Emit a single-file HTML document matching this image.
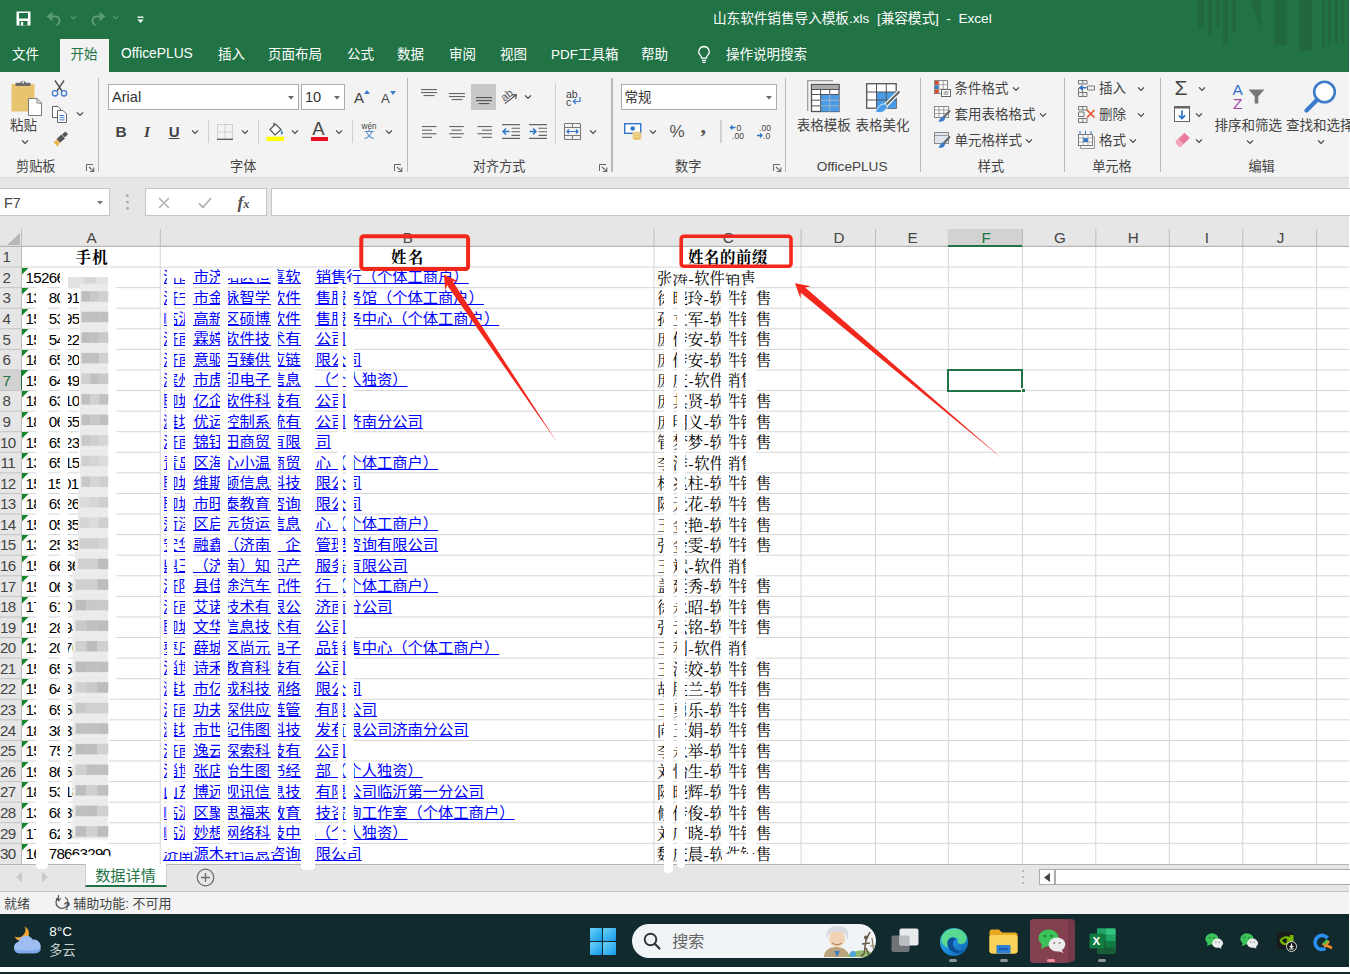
<!DOCTYPE html>
<html lang="zh-CN"><head><meta charset="utf-8"><title>山东软件销售导入模板.xls - Excel</title>
<style>
html,body{margin:0;padding:0;}
body{width:1350px;height:974px;overflow:hidden;background:#fff;position:relative;font-family:"Liberation Sans","Noto Sans CJK SC",sans-serif;}
.a{position:absolute;box-sizing:border-box;}
.t{white-space:nowrap;}
.ser{font-family:"Liberation Serif","Noto Serif CJK SC",serif;}
.lnk{color:#0000ff;text-decoration:underline;text-decoration-thickness:1px;text-underline-offset:1.3px;}
svg{overflow:visible;}
</style></head>
<body>
<div class="a" style="left:0px;top:0px;width:1349px;height:72.3px;background:#217346;"></div>
<svg class="a" style="left:1190px;top:0px;" width="159" height="60" viewBox="0 0 159 60"><rect x="8" y="0" width="6" height="28" fill="#22683f"/><rect x="18" y="0" width="4" height="36" fill="#22683f"/><rect x="26" y="0" width="4" height="28" fill="#22683f"/><rect x="33" y="0" width="5" height="45" fill="#22683f"/><rect x="42" y="0" width="4" height="33" fill="#22683f"/><rect x="84" y="0" width="13" height="45" fill="#22683f"/><rect x="109" y="0" width="13" height="51" fill="#22683f"/><rect x="132" y="0" width="3" height="47" fill="#22683f"/><rect x="138" y="0" width="3" height="46" fill="#22683f"/><rect x="145" y="0" width="3" height="44" fill="#22683f"/><rect x="151" y="0" width="3" height="43" fill="#22683f"/><path d="M60 0 H71 V29 Z" fill="#22683f"/></svg>
<svg class="a" style="left:16px;top:11px;" width="15" height="15" viewBox="0 0 15 15"><path d="M0.5 0.5 H14.5 V14.5 H0.5 Z" fill="#fff"/><rect x="3" y="2" width="9" height="5.5" fill="#217346"/><rect x="3.5" y="10" width="8" height="4.5" fill="#217346"/><rect x="5" y="11" width="2.2" height="3.5" fill="#fff"/></svg>
<svg class="a" style="left:46px;top:10px;" width="18" height="16" viewBox="0 0 18 16"><path d="M2 6.5 H10.5 A4.5 4.5 0 0 1 10.5 15" fill="none" stroke="#5a9a76" stroke-width="2"/><path d="M0.5 6.5 L6.5 1.5 V11.5 Z" fill="#5a9a76"/></svg>
<svg class="a" style="left:69.9px;top:14.9px;" width="7.2" height="5.2" viewBox="0 0 7.2 5.2"><path d="M1 1.17 L3.6 3.77 L6.2 1.17" fill="none" stroke="#5a9a76" stroke-width="1.1"/></svg>
<svg class="a" style="left:88px;top:10px;" width="18" height="16" viewBox="0 0 18 16"><path d="M16 6.5 H7.5 A4.5 4.5 0 0 0 7.5 15" fill="none" stroke="#5a9a76" stroke-width="2"/><path d="M17.5 6.5 L11.5 1.5 V11.5 Z" fill="#5a9a76"/></svg>
<svg class="a" style="left:112.4px;top:14.9px;" width="7.2" height="5.2" viewBox="0 0 7.2 5.2"><path d="M1 1.17 L3.6 3.77 L6.2 1.17" fill="none" stroke="#5a9a76" stroke-width="1.1"/></svg>
<svg class="a" style="left:137px;top:16px;" width="7" height="8" viewBox="0 0 7 8"><rect x="0.5" y="0.5" width="6" height="1.4" fill="#fff"/><path d="M0.3 3.6 H6.7 L3.5 7 Z" fill="#fff"/></svg>
<div class="a t " style="left:713px;top:8.00px;height:22px;line-height:22px;font-size:13.6px;color:#fff;">山东软件销售导入模板.xls&nbsp; [兼容模式]&nbsp; -&nbsp; Excel</div>
<div class="a" style="left:60px;top:38.5px;width:49px;height:34px;background:#f3f3f3;"></div>
<div class="a t " style="left:12px;top:44.00px;height:22px;line-height:22px;font-size:13.5px;color:#fff;">文件</div>
<div class="a t " style="left:121px;top:43.00px;height:22px;line-height:22px;font-size:13.8px;color:#fff;">OfficePLUS</div>
<div class="a t " style="left:218px;top:44.00px;height:22px;line-height:22px;font-size:13.5px;color:#fff;">插入</div>
<div class="a t " style="left:268px;top:44.00px;height:22px;line-height:22px;font-size:13.5px;color:#fff;">页面布局</div>
<div class="a t " style="left:347px;top:44.00px;height:22px;line-height:22px;font-size:13.5px;color:#fff;">公式</div>
<div class="a t " style="left:397px;top:44.00px;height:22px;line-height:22px;font-size:13.5px;color:#fff;">数据</div>
<div class="a t " style="left:449px;top:44.00px;height:22px;line-height:22px;font-size:13.5px;color:#fff;">审阅</div>
<div class="a t " style="left:500px;top:44.00px;height:22px;line-height:22px;font-size:13.5px;color:#fff;">视图</div>
<div class="a t " style="left:551px;top:44.00px;height:22px;line-height:22px;font-size:13.5px;color:#fff;">PDF工具箱</div>
<div class="a t " style="left:641px;top:44.00px;height:22px;line-height:22px;font-size:13.5px;color:#fff;">帮助</div>
<div class="a t " style="left:726px;top:44.00px;height:22px;line-height:22px;font-size:13.5px;color:#fff;">操作说明搜索</div>
<div class="a t " style="left:70.5px;top:44.00px;height:22px;line-height:22px;font-size:13.5px;color:#217346;">开始</div>
<svg class="a" style="left:696px;top:45px;" width="16" height="20" viewBox="0 0 16 20"><path d="M8 1.5 A5.2 5.2 0 0 0 4.6 10.6 C5.4 11.4 5.6 12.2 5.6 13.2 H10.4 C10.4 12.2 10.6 11.4 11.4 10.6 A5.2 5.2 0 0 0 8 1.5 Z" fill="none" stroke="#fff" stroke-width="1.3"/><path d="M5.8 15.3 H10.2 M6.4 17.4 H9.6" stroke="#fff" stroke-width="1.3"/></svg>
<div class="a" style="left:0px;top:72.3px;width:1349px;height:105px;background:#f3f3f3;"></div>
<div class="a" style="left:0px;top:177.3px;width:1349px;height:51px;background:#e6e6e6;"></div>
<div class="a" style="left:0px;top:176.7px;width:1349px;height:1.2px;background:#dadada;"></div>
<svg class="a" style="left:11px;top:79px;" width="32" height="37" viewBox="0 0 32 37"><rect x="0.5" y="5" width="23" height="27.5" fill="#e9c46f"/><path d="M4.5 7 V3.8 H9.3 A2.8 2.8 0 0 1 14.7 3.8 H19.5 V7 Z" fill="#6b6b6b"/><circle cx="12" cy="3.3" r="1.1" fill="#f3f3f3"/><path d="M17.5 19.5 H26 L30.5 24 V36.5 H17.5 Z" fill="#fff" stroke="#7a7a7a" stroke-width="1"/><path d="M26 19.5 V24 H30.5" fill="none" stroke="#7a7a7a" stroke-width="1"/></svg>
<div class="a t " style="left:10px;top:115.00px;height:22px;line-height:22px;font-size:13.5px;color:#444;">粘贴</div>
<svg class="a" style="left:21px;top:138.5px;" width="8" height="6" viewBox="0 0 8 6"><path d="M1 1.35 L4 4.35 L7 1.35" fill="none" stroke="#444" stroke-width="1.2"/></svg>
<svg class="a" style="left:51px;top:80px;" width="17" height="17" viewBox="0 0 17 17"><path d="M4 0.5 L11 11 M13 0.5 L6 11" stroke="#555" stroke-width="1.4" fill="none"/><circle cx="4" cy="13.3" r="2.7" fill="none" stroke="#3d7cc9" stroke-width="1.3"/><circle cx="13" cy="13.3" r="2.7" fill="none" stroke="#3d7cc9" stroke-width="1.3"/></svg>
<svg class="a" style="left:52px;top:106px;" width="16" height="17" viewBox="0 0 16 17"><path d="M0.5 0.5 H6 L8.5 3 V11.5 H0.5 Z" fill="#fff" stroke="#666" stroke-width="1"/><path d="M5.5 4.5 H11 L14.5 8 V16.5 H5.5 Z" fill="#fff" stroke="#666" stroke-width="1"/><path d="M7.5 9.5 H12.5 M7.5 11.7 H12.5 M7.5 13.9 H12.5" stroke="#3d7cc9" stroke-width="1"/></svg>
<svg class="a" style="left:76px;top:111px;" width="8" height="6" viewBox="0 0 8 6"><path d="M1 1.35 L4 4.35 L7 1.35" fill="none" stroke="#444" stroke-width="1.2"/></svg>
<svg class="a" style="left:53px;top:131px;" width="16" height="16" viewBox="0 0 16 16"><path d="M9 3.5 L12.5 0.5 L15 3.2 L11.8 6.2 Z" fill="#555"/><path d="M3.5 8 L8.5 3.6 L12 7.4 L7 11.8 Z" fill="#555"/><path d="M0.5 11.5 L3.8 8.5 L7 12 L4.6 15.5 Z" fill="#e9b44c"/></svg>
<div class="a t " style="left:16px;top:156.40px;height:22px;line-height:22px;font-size:13.2px;color:#444;">剪贴板</div>
<svg class="a" style="left:86px;top:164px;" width="9" height="8" viewBox="0 0 9 8"><path d="M0.5 7 V0.5 H7" fill="none" stroke="#666" stroke-width="1"/><path d="M3 3 L7.5 7.2 M7.8 3.6 V7.5 H3.8" fill="none" stroke="#666" stroke-width="1.1"/></svg>
<div class="a" style="left:98.10000000000001px;top:77.5px;width:1.2px;height:94.0px;background:#b9b9b9;"></div>
<div class="a" style="left:108.3px;top:84px;width:190.7px;height:26px;background:#fff;border:1px solid #ababab;"></div>
<div class="a t " style="left:112px;top:86.00px;height:22px;line-height:22px;font-size:14.6px;color:#333;">Arial</div>
<svg class="a" style="left:288.0px;top:95.8px;" width="6" height="3.4" viewBox="0 0 6 3.4"><path d="M0 0 H6 L3.0 3.4 Z" fill="#666"/></svg>
<div class="a" style="left:301px;top:84px;width:44px;height:26px;background:#fff;border:1px solid #ababab;"></div>
<div class="a t " style="left:305px;top:86.00px;height:22px;line-height:22px;font-size:14.6px;color:#333;">10</div>
<svg class="a" style="left:334.0px;top:95.8px;" width="6" height="3.4" viewBox="0 0 6 3.4"><path d="M0 0 H6 L3.0 3.4 Z" fill="#666"/></svg>
<div class="a t " style="left:354px;top:87.00px;height:22px;line-height:22px;font-size:15px;color:#444;">A</div>
<svg class="a" style="left:364px;top:90px;" width="6" height="4" viewBox="0 0 6 4"><path d="M0 4 L3 0 L6 4 Z" fill="#3d7cc9"/></svg>
<div class="a t " style="left:381px;top:87.50px;height:22px;line-height:22px;font-size:13.2px;color:#444;">A</div>
<svg class="a" style="left:389.5px;top:91px;" width="6" height="4" viewBox="0 0 6 4"><path d="M0 0 L3 4 L6 0 Z" fill="#3d7cc9"/></svg>
<div class="a t " style="left:115.5px;top:121.00px;height:22px;line-height:22px;font-size:15.5px;color:#444;font-weight:bold;">B</div>
<div class="a t " style="left:144px;top:121.00px;height:22px;line-height:22px;font-size:15.5px;color:#444;font-style:italic;font-weight:bold;font-family:'Liberation Serif',serif;">I</div>
<div class="a t " style="left:168.7px;top:121.00px;height:22px;line-height:22px;font-size:15px;color:#444;text-decoration:underline;font-weight:bold;">U</div>
<svg class="a" style="left:191px;top:129px;" width="8" height="6" viewBox="0 0 8 6"><path d="M1 1.35 L4 4.35 L7 1.35" fill="none" stroke="#444" stroke-width="1.2"/></svg>
<div class="a" style="left:208.1px;top:120px;width:1.2px;height:23px;background:#d0d0d0;"></div>
<svg class="a" style="left:216.5px;top:124px;" width="16" height="16" viewBox="0 0 16 16"><path d="M0.5 0.5 H15.5 M0.5 0.5 V15 M15.5 0.5 V15 M8 0.5 V15 M0.5 8 H15.5" fill="none" stroke="#b0b0b0" stroke-width="1" stroke-dasharray="1 1"/><path d="M0 15.3 H16" stroke="#555" stroke-width="1.3"/></svg>
<svg class="a" style="left:241px;top:129px;" width="8" height="6" viewBox="0 0 8 6"><path d="M1 1.35 L4 4.35 L7 1.35" fill="none" stroke="#444" stroke-width="1.2"/></svg>
<div class="a" style="left:258.09999999999997px;top:120px;width:1.2px;height:23px;background:#d0d0d0;"></div>
<svg class="a" style="left:266px;top:122px;" width="19" height="20" viewBox="0 0 19 20"><path d="M4 7.5 L9.5 2 L15 7.5 L9 13 Z" fill="#fff" stroke="#555" stroke-width="1.2"/><path d="M8 3.5 V0.8" stroke="#555" stroke-width="1.2"/><path d="M15.2 8 C16.8 10 17.4 11 16.4 12.2 C15.4 13 14.2 12 15.2 8 Z" fill="#3d7cc9"/><rect x="0.5" y="14.7" width="17.5" height="4.3" fill="#ffff00"/></svg>
<svg class="a" style="left:291px;top:129px;" width="8" height="6" viewBox="0 0 8 6"><path d="M1 1.35 L4 4.35 L7 1.35" fill="none" stroke="#444" stroke-width="1.2"/></svg>
<div class="a t " style="left:312.3px;top:118.00px;height:22px;line-height:22px;font-size:18.5px;color:#444;">A</div>
<div class="a" style="left:310.5px;top:136.7px;width:17.5px;height:4.3px;background:#e81123;"></div>
<svg class="a" style="left:335px;top:129px;" width="8" height="6" viewBox="0 0 8 6"><path d="M1 1.35 L4 4.35 L7 1.35" fill="none" stroke="#444" stroke-width="1.2"/></svg>
<div class="a" style="left:352.09999999999997px;top:120px;width:1.2px;height:23px;background:#d0d0d0;"></div>
<div class="a t " style="left:361.5px;top:115.80px;height:22px;line-height:22px;font-size:8.2px;color:#444;">wén</div>
<div class="a t " style="left:364px;top:124.20px;height:22px;line-height:22px;font-size:10px;color:#3d7cc9;">文</div>
<svg class="a" style="left:385.3px;top:129px;" width="8" height="6" viewBox="0 0 8 6"><path d="M1 1.35 L4 4.35 L7 1.35" fill="none" stroke="#444" stroke-width="1.2"/></svg>
<div class="a t " style="left:230px;top:156.40px;height:22px;line-height:22px;font-size:13.2px;color:#444;">字体</div>
<svg class="a" style="left:394px;top:164px;" width="9" height="8" viewBox="0 0 9 8"><path d="M0.5 7 V0.5 H7" fill="none" stroke="#666" stroke-width="1"/><path d="M3 3 L7.5 7.2 M7.8 3.6 V7.5 H3.8" fill="none" stroke="#666" stroke-width="1.1"/></svg>
<div class="a" style="left:406.7px;top:77.5px;width:1.2px;height:94.0px;background:#b9b9b9;"></div>
<svg class="a" style="left:421px;top:88.5px;" width="16" height="9" viewBox="0 0 16 9"><rect x="0.0" y="0" width="16" height="1.1" fill="#666"/><rect x="0.0" y="3" width="16" height="1.1" fill="#666"/><rect x="2.5" y="6" width="11" height="1.1" fill="#666"/></svg>
<svg class="a" style="left:448.5px;top:92.5px;" width="16" height="9" viewBox="0 0 16 9"><rect x="0.0" y="0" width="16" height="1.1" fill="#666"/><rect x="0.0" y="3" width="16" height="1.1" fill="#666"/><rect x="2.5" y="6" width="11" height="1.1" fill="#666"/></svg>
<div class="a" style="left:470.7px;top:84px;width:25.5px;height:26px;background:#c8c8c8;"></div>
<svg class="a" style="left:475.5px;top:96.5px;" width="16" height="9" viewBox="0 0 16 9"><rect x="0.0" y="0" width="16" height="1.1" fill="#555"/><rect x="0.0" y="3" width="16" height="1.1" fill="#555"/><rect x="2.5" y="6" width="11" height="1.1" fill="#555"/></svg>
<svg class="a" style="left:501px;top:88px;" width="18" height="17" viewBox="0 0 18 17"><text x="1" y="11" font-size="11" fill="#555" transform="rotate(-38 6 9)" font-family="Liberation Sans">ab</text><path d="M4 15.5 L15.5 6.5 M15.5 6.5 L11 6.8 M15.5 6.5 L14.6 11" stroke="#555" stroke-width="1.2" fill="none"/></svg>
<svg class="a" style="left:524.3px;top:94px;" width="8" height="6" viewBox="0 0 8 6"><path d="M1 1.35 L4 4.35 L7 1.35" fill="none" stroke="#444" stroke-width="1.2"/></svg>
<div class="a" style="left:554.6999999999999px;top:83px;width:1.2px;height:61px;background:#d0d0d0;"></div>
<div class="a t " style="left:566px;top:82.50px;height:22px;line-height:22px;font-size:10.5px;color:#444;">ab</div>
<div class="a t " style="left:566px;top:90.50px;height:22px;line-height:22px;font-size:10.5px;color:#444;">c</div>
<svg class="a" style="left:572px;top:97px;" width="9" height="8" viewBox="0 0 9 8"><path d="M8 0 V4.5 H1.5 M4 2 L1.2 4.5 L4 7" fill="none" stroke="#3d7cc9" stroke-width="1.2"/></svg>
<svg class="a" style="left:421.7px;top:125.5px;" width="15" height="14.4" viewBox="0 0 15 14.4"><rect x="0" y="0.0" width="14.5" height="1.1" fill="#666"/><rect x="0" y="3.6" width="10" height="1.1" fill="#666"/><rect x="0" y="7.2" width="14.5" height="1.1" fill="#666"/><rect x="0" y="10.8" width="10" height="1.1" fill="#666"/></svg>
<svg class="a" style="left:449px;top:125.5px;" width="15" height="14.4" viewBox="0 0 15 14.4"><rect x="0.25" y="0.0" width="14.5" height="1.1" fill="#666"/><rect x="2.5" y="3.6" width="10" height="1.1" fill="#666"/><rect x="0.25" y="7.2" width="14.5" height="1.1" fill="#666"/><rect x="2.5" y="10.8" width="10" height="1.1" fill="#666"/></svg>
<svg class="a" style="left:476.5px;top:125.5px;" width="15" height="14.4" viewBox="0 0 15 14.4"><rect x="0.5" y="0.0" width="14.5" height="1.1" fill="#666"/><rect x="5" y="3.6" width="10" height="1.1" fill="#666"/><rect x="0.5" y="7.2" width="14.5" height="1.1" fill="#666"/><rect x="5" y="10.8" width="10" height="1.1" fill="#666"/></svg>
<svg class="a" style="left:501.5px;top:124px;" width="18" height="15" viewBox="0 0 18 15"><path d="M0 0.6 H18 M9.5 4.2 H18 M9.5 7.8 H18 M9.5 11.4 H18 M0 14.4 H18" stroke="#666" stroke-width="1.1"/><path d="M7.5 7.5 H1 M4 4.5 L1 7.5 L4 10.5" fill="none" stroke="#2f75c8" stroke-width="1.5"/></svg>
<svg class="a" style="left:529px;top:124px;" width="18" height="15" viewBox="0 0 18 15"><path d="M0 0.6 H18 M9.5 4.2 H18 M9.5 7.8 H18 M9.5 11.4 H18 M0 14.4 H18" stroke="#666" stroke-width="1.1"/><path d="M0.5 7.5 H7 M4 4.5 L7 7.5 L4 10.5" fill="none" stroke="#2f75c8" stroke-width="1.5"/></svg>
<svg class="a" style="left:564px;top:123px;" width="17" height="17" viewBox="0 0 17 17"><path d="M0.5 0.5 H16.5 V16.5 H0.5 Z M0.5 4.5 H16.5 M0.5 12.5 H16.5 M8.5 0.5 V4.5 M8.5 12.5 V16.5" fill="none" stroke="#777" stroke-width="1"/><path d="M3 8.5 H14 M5 6.5 L3 8.5 L5 10.5 M12 6.5 L14 8.5 L12 10.5" fill="none" stroke="#2f75c8" stroke-width="1.2"/></svg>
<svg class="a" style="left:588.7px;top:129px;" width="8" height="6" viewBox="0 0 8 6"><path d="M1 1.35 L4 4.35 L7 1.35" fill="none" stroke="#444" stroke-width="1.2"/></svg>
<div class="a t " style="left:472.7px;top:156.40px;height:22px;line-height:22px;font-size:13.2px;color:#444;">对齐方式</div>
<svg class="a" style="left:599px;top:164px;" width="9" height="8" viewBox="0 0 9 8"><path d="M0.5 7 V0.5 H7" fill="none" stroke="#666" stroke-width="1"/><path d="M3 3 L7.5 7.2 M7.8 3.6 V7.5 H3.8" fill="none" stroke="#666" stroke-width="1.1"/></svg>
<div class="a" style="left:611.4px;top:77.5px;width:1.2px;height:94.0px;background:#b9b9b9;"></div>
<div class="a" style="left:621px;top:84px;width:155.7px;height:26px;background:#fff;border:1px solid #ababab;"></div>
<div class="a t " style="left:624.5px;top:87.00px;height:22px;line-height:22px;font-size:13.5px;color:#333;">常规</div>
<svg class="a" style="left:765.7px;top:95.8px;" width="6" height="3.4" viewBox="0 0 6 3.4"><path d="M0 0 H6 L3.0 3.4 Z" fill="#666"/></svg>
<svg class="a" style="left:624px;top:123px;" width="19" height="18" viewBox="0 0 19 18"><rect x="0.7" y="0.7" width="16" height="9.6" fill="#fff" stroke="#2f75c8" stroke-width="1.4"/><circle cx="8.7" cy="5.5" r="2.3" fill="#2f75c8"/><ellipse cx="13" cy="15.3" rx="4.5" ry="1.6" fill="#e9c46f"/><ellipse cx="13" cy="12.9" rx="4.5" ry="1.6" fill="#f0d48a" stroke="#d9b25c" stroke-width="0.5"/><ellipse cx="13" cy="10.6" rx="4.5" ry="1.6" fill="#f0d48a" stroke="#d9b25c" stroke-width="0.5"/></svg>
<svg class="a" style="left:649.3px;top:129px;" width="8" height="6" viewBox="0 0 8 6"><path d="M1 1.35 L4 4.35 L7 1.35" fill="none" stroke="#444" stroke-width="1.2"/></svg>
<div class="a t " style="left:669.5px;top:121.00px;height:22px;line-height:22px;font-size:17px;color:#555;">%</div>
<div class="a t " style="left:700.5px;top:115.00px;height:22px;line-height:22px;font-size:22px;color:#555;font-weight:bold;font-family:'Liberation Serif',serif;">,</div>
<div class="a" style="left:720.4px;top:120px;width:1.2px;height:23px;background:#d0d0d0;"></div>
<svg class="a" style="left:729px;top:124px;" width="17" height="16" viewBox="0 0 17 16"><path d="M6.5 3.5 H1.5 M3.5 1.5 L1.5 3.5 L3.5 5.5" fill="none" stroke="#2f75c8" stroke-width="1.3"/><text x="7.5" y="6.5" font-size="8.6" fill="#444" font-family="Liberation Sans">0</text><text x="3" y="15" font-size="8.6" fill="#444" font-family="Liberation Sans">.00</text></svg>
<svg class="a" style="left:756px;top:124px;" width="17" height="16" viewBox="0 0 17 16"><text x="3" y="6.5" font-size="8.6" fill="#444" font-family="Liberation Sans">.00</text><path d="M1 11.5 H6 M4 9.5 L6 11.5 L4 13.5" fill="none" stroke="#2f75c8" stroke-width="1.3"/><text x="7" y="15" font-size="8.6" fill="#444" font-family="Liberation Sans">.0</text></svg>
<div class="a t " style="left:675px;top:156.40px;height:22px;line-height:22px;font-size:13.2px;color:#444;">数字</div>
<svg class="a" style="left:773px;top:164px;" width="9" height="8" viewBox="0 0 9 8"><path d="M0.5 7 V0.5 H7" fill="none" stroke="#666" stroke-width="1"/><path d="M3 3 L7.5 7.2 M7.8 3.6 V7.5 H3.8" fill="none" stroke="#666" stroke-width="1.1"/></svg>
<div class="a" style="left:785.1px;top:77.5px;width:1.2px;height:94.0px;background:#b9b9b9;"></div>
<svg class="a" style="left:807px;top:80px;" width="33" height="33" viewBox="0 0 33 33"><path d="M0.7 31 V0.7 H26" fill="none" stroke="#999" stroke-width="1.2"/><rect x="4.5" y="4.5" width="27.5" height="27" fill="#fff" stroke="#555" stroke-width="1.3"/><rect x="4.5" y="4.5" width="27.5" height="5" fill="#aaa" stroke="#555" stroke-width="1"/><rect x="13.6" y="14.5" width="18.4" height="17" fill="#4a9be8"/><path d="M4.5 14.5 H32 M4.5 20.2 H32 M4.5 25.9 H32 M13.6 9.5 V31.5 M22.8 9.5 V31.5" stroke="#555" stroke-width="1" fill="none"/><path d="M13.6 20.2 H32 M13.6 25.9 H32 M22.8 14.5 V31.5" stroke="#9fd0fa" stroke-width="1" fill="none"/></svg>
<div class="a t " style="left:796.7px;top:115.00px;height:22px;line-height:22px;font-size:13.5px;color:#444;">表格模板</div>
<svg class="a" style="left:866px;top:83px;" width="35" height="32" viewBox="0 0 35 32"><rect x="0.7" y="0.7" width="29.5" height="24.5" fill="#fff" stroke="#555" stroke-width="1.3"/><rect x="10.5" y="9" width="19.7" height="16.2" fill="#4a9be8"/><path d="M0.7 9 H30 M0.7 17 H30 M10.5 0.7 V25 M20.3 0.7 V25" stroke="#555" stroke-width="1" fill="none"/><path d="M33.5 8.5 L18 24" stroke="#fff" stroke-width="4.5"/><path d="M33.5 8.5 L18.5 23.5" stroke="#666" stroke-width="2.2"/><path d="M19.5 21 C15 20.5 12 24 9 28.5 C14 31 20 29.5 21.5 23 Z" fill="#4a9be8" stroke="#fff" stroke-width="0.8"/></svg>
<div class="a t " style="left:855.6px;top:115.00px;height:22px;line-height:22px;font-size:13.5px;color:#444;">表格美化</div>
<div class="a t " style="left:816.7px;top:156.20px;height:22px;line-height:22px;font-size:13.6px;color:#444;">OfficePLUS</div>
<div class="a" style="left:919.8px;top:77.5px;width:1.2px;height:94.0px;background:#b9b9b9;"></div>
<svg class="a" style="left:934px;top:80px;" width="17" height="17" viewBox="0 0 17 17"><rect x="0.5" y="0.5" width="13" height="13" fill="#fff" stroke="#888" stroke-width="1"/><path d="M0.5 4.8 H13.5 M0.5 9.2 H13.5 M4.8 0.5 V13.5 M9.2 0.5 V13.5" stroke="#888" stroke-width="0.8"/><rect x="1" y="1" width="3.6" height="3.6" fill="#d9482b"/><rect x="1" y="5.2" width="3.6" height="3.8" fill="#3d7cc9"/><rect x="1" y="9.6" width="3.6" height="3.6" fill="#d9482b"/><rect x="7.5" y="9.5" width="9" height="7" fill="#fff" stroke="#666" stroke-width="1"/><path d="M9.5 12 H14.5 M9.5 14 H14.5" stroke="#666" stroke-width="0.9"/></svg>
<div class="a t " style="left:954.4px;top:78.20px;height:22px;line-height:22px;font-size:13.5px;color:#444;">条件格式</div>
<svg class="a" style="left:1012px;top:86px;" width="8" height="6" viewBox="0 0 8 6"><path d="M1 1.35 L4 4.35 L7 1.35" fill="none" stroke="#444" stroke-width="1.2"/></svg>
<svg class="a" style="left:934px;top:106px;" width="17" height="17" viewBox="0 0 17 17"><rect x="0.5" y="0.5" width="14" height="11" fill="#fff" stroke="#888" stroke-width="1"/><path d="M0.5 4 H14.5 M0.5 7.6 H14.5 M5 0.5 V11.5 M9.8 0.5 V11.5" stroke="#888" stroke-width="0.8"/><path d="M16 4.5 L9 12" stroke="#666" stroke-width="2"/><path d="M9.5 10.5 C7 10.5 6 13 4.5 15.5 C8 16.5 11 15 11 12 Z" fill="#3d7cc9"/></svg>
<div class="a t " style="left:954.4px;top:104.40px;height:22px;line-height:22px;font-size:13.5px;color:#444;">套用表格格式</div>
<svg class="a" style="left:1038.7px;top:112px;" width="8" height="6" viewBox="0 0 8 6"><path d="M1 1.35 L4 4.35 L7 1.35" fill="none" stroke="#444" stroke-width="1.2"/></svg>
<svg class="a" style="left:934px;top:132px;" width="17" height="17" viewBox="0 0 17 17"><rect x="0.5" y="0.5" width="14" height="11" fill="#dfe6ee" stroke="#888" stroke-width="1"/><path d="M0.5 3.5 H14.5" stroke="#888" stroke-width="0.8"/><path d="M16 4.5 L9 12" stroke="#666" stroke-width="2"/><path d="M9.5 10.5 C7 10.5 6 13 4.5 15.5 C8 16.5 11 15 11 12 Z" fill="#3d7cc9"/></svg>
<div class="a t " style="left:954.4px;top:130.20px;height:22px;line-height:22px;font-size:13.5px;color:#444;">单元格样式</div>
<svg class="a" style="left:1025.3px;top:138px;" width="8" height="6" viewBox="0 0 8 6"><path d="M1 1.35 L4 4.35 L7 1.35" fill="none" stroke="#444" stroke-width="1.2"/></svg>
<div class="a t " style="left:977.8px;top:156.40px;height:22px;line-height:22px;font-size:13.2px;color:#444;">样式</div>
<div class="a" style="left:1063.8000000000002px;top:77.5px;width:1.2px;height:94.0px;background:#b9b9b9;"></div>
<svg class="a" style="left:1077.5px;top:80px;" width="17" height="17" viewBox="0 0 17 17"><path d="M0.5 0.5 H9 V4 H0.5 Z M0.5 12.5 H9 V16.5 H0.5 Z M0.5 8 H4.5 V12.5 H0.5 Z M9.5 6 H16.5 V10 H9.5 Z M4.8 12.5 V16.5 M4.8 0.5 V4" fill="none" stroke="#777" stroke-width="1"/><path d="M8.5 7.8 H2 M4.5 5.6 L2 7.8 L4.5 10" fill="none" stroke="#2f75c8" stroke-width="1.4"/></svg>
<div class="a t " style="left:1098.9px;top:78.20px;height:22px;line-height:22px;font-size:13.5px;color:#444;">插入</div>
<svg class="a" style="left:1137px;top:86px;" width="8" height="6" viewBox="0 0 8 6"><path d="M1 1.35 L4 4.35 L7 1.35" fill="none" stroke="#444" stroke-width="1.2"/></svg>
<svg class="a" style="left:1077.5px;top:106px;" width="18" height="17" viewBox="0 0 18 17"><path d="M0.5 0.5 H9 V4 H0.5 Z M0.5 12.5 H9 V16.5 H0.5 Z M0.5 6 H6 V10.5 H0.5 Z M4.8 12.5 V16.5 M4.8 0.5 V4" fill="none" stroke="#777" stroke-width="1"/><path d="M9 4 L16.5 11.5 M16.5 4 L9 11.5" stroke="#e8532b" stroke-width="1.7"/></svg>
<div class="a t " style="left:1098.9px;top:104.40px;height:22px;line-height:22px;font-size:13.5px;color:#444;">删除</div>
<svg class="a" style="left:1137px;top:112px;" width="8" height="6" viewBox="0 0 8 6"><path d="M1 1.35 L4 4.35 L7 1.35" fill="none" stroke="#444" stroke-width="1.2"/></svg>
<svg class="a" style="left:1077.5px;top:131px;" width="18" height="19" viewBox="0 0 18 19"><path d="M2 0 V3 M7.5 0 V3 M13 0 V3" stroke="#2f75c8" stroke-width="1"/><rect x="0.5" y="3.5" width="14" height="11" fill="#fff" stroke="#777" stroke-width="1"/><path d="M0.5 7 H14.5 M0.5 11 H14.5 M5 3.5 V14.5 M10 3.5 V14.5" stroke="#999" stroke-width="0.8"/><rect x="5.3" y="7.2" width="4.6" height="3.8" fill="#2f75c8"/><path d="M2.5 14.5 V17.5 H16.5 V6 H14.5" fill="none" stroke="#999" stroke-width="1"/></svg>
<div class="a t " style="left:1098.9px;top:130.20px;height:22px;line-height:22px;font-size:13.5px;color:#444;">格式</div>
<svg class="a" style="left:1129.3px;top:138px;" width="8" height="6" viewBox="0 0 8 6"><path d="M1 1.35 L4 4.35 L7 1.35" fill="none" stroke="#444" stroke-width="1.2"/></svg>
<div class="a t " style="left:1092.2px;top:156.40px;height:22px;line-height:22px;font-size:13.2px;color:#444;">单元格</div>
<div class="a" style="left:1159.8000000000002px;top:77.5px;width:1.2px;height:94.0px;background:#b9b9b9;"></div>
<div class="a t " style="left:1174.5px;top:77.00px;height:22px;line-height:22px;font-size:21px;color:#444;">Σ</div>
<svg class="a" style="left:1198px;top:85.5px;" width="8" height="6" viewBox="0 0 8 6"><path d="M1 1.35 L4 4.35 L7 1.35" fill="none" stroke="#444" stroke-width="1.2"/></svg>
<svg class="a" style="left:1174px;top:106px;" width="16" height="16" viewBox="0 0 16 16"><rect x="0.5" y="0.5" width="15" height="15" fill="#fff" stroke="#666" stroke-width="1"/><rect x="0.5" y="0.5" width="15" height="2" fill="#666"/><path d="M8 4.5 V12.5 M4.8 9.3 L8 12.5 L11.2 9.3" fill="none" stroke="#2f75c8" stroke-width="1.7"/></svg>
<svg class="a" style="left:1195.3px;top:111.5px;" width="8" height="6" viewBox="0 0 8 6"><path d="M1 1.35 L4 4.35 L7 1.35" fill="none" stroke="#444" stroke-width="1.2"/></svg>
<svg class="a" style="left:1175px;top:132px;" width="16" height="15" viewBox="0 0 16 15"><path d="M0.5 9.5 L9.5 0.8 L14.8 6 L6 14.5 L3.5 14.5 Z" fill="#e97a9b"/><path d="M0.5 9.5 L3.3 6.8 L8.6 12 L6 14.5 L3.5 14.5 Z" fill="#f3a5bb"/></svg>
<svg class="a" style="left:1195.3px;top:137.5px;" width="8" height="6" viewBox="0 0 8 6"><path d="M1 1.35 L4 4.35 L7 1.35" fill="none" stroke="#444" stroke-width="1.2"/></svg>
<div class="a t " style="left:1232.5px;top:78.50px;height:22px;line-height:22px;font-size:15.5px;color:#2f75c8;">A</div>
<div class="a t " style="left:1233px;top:92.50px;height:22px;line-height:22px;font-size:15.5px;color:#a349a4;">Z</div>
<svg class="a" style="left:1247.5px;top:89px;" width="17" height="15" viewBox="0 0 17 15"><path d="M0.5 0.5 H16.5 L10.3 7.5 V14.5 H6.7 V7.5 Z" fill="#777"/></svg>
<div class="a t " style="left:1214.4px;top:115.00px;height:22px;line-height:22px;font-size:13.5px;color:#444;">排序和筛选</div>
<svg class="a" style="left:1246px;top:138.5px;" width="8" height="6" viewBox="0 0 8 6"><path d="M1 1.35 L4 4.35 L7 1.35" fill="none" stroke="#444" stroke-width="1.2"/></svg>
<svg class="a" style="left:1304px;top:80px;" width="33" height="33" viewBox="0 0 33 33"><circle cx="20.5" cy="12" r="10.3" fill="#fff" stroke="#3d7cc9" stroke-width="2.6"/><path d="M13 20 L2.5 30.5" stroke="#3d7cc9" stroke-width="4.2" stroke-linecap="round"/></svg>
<div class="a t " style="left:1286px;top:115.00px;height:22px;line-height:22px;font-size:13.5px;color:#444;">查找和选择</div>
<svg class="a" style="left:1317px;top:138.5px;" width="8" height="6" viewBox="0 0 8 6"><path d="M1 1.35 L4 4.35 L7 1.35" fill="none" stroke="#444" stroke-width="1.2"/></svg>
<div class="a t " style="left:1248.4px;top:156.40px;height:22px;line-height:22px;font-size:13.2px;color:#444;">编辑</div>
<div class="a" style="left:0px;top:188.4px;width:110px;height:27.8px;background:#fff;border:1px solid #c6c6c6;border-left:none;"></div>
<div class="a t " style="left:4px;top:191.50px;height:22px;line-height:22px;font-size:14.3px;color:#444;">F7</div>
<svg class="a" style="left:97.0px;top:200.8px;" width="6" height="3.4" viewBox="0 0 6 3.4"><path d="M0 0 H6 L3.0 3.4 Z" fill="#777"/></svg>
<svg class="a" style="left:125.5px;top:194px;" width="3" height="16" viewBox="0 0 3 16"><circle cx="1.5" cy="1.7" r="1.35" fill="#a6a6a6"/><circle cx="1.5" cy="8" r="1.35" fill="#a6a6a6"/><circle cx="1.5" cy="14.3" r="1.35" fill="#a6a6a6"/></svg>
<div class="a" style="left:144.5px;top:188.4px;width:122px;height:27.8px;background:#fff;border:1px solid #c6c6c6;"></div>
<svg class="a" style="left:158px;top:196.5px;" width="12" height="12" viewBox="0 0 12 12"><path d="M1 1 L11 11 M11 1 L1 11" stroke="#b4b4b4" stroke-width="1.6"/></svg>
<svg class="a" style="left:198px;top:196.5px;" width="14" height="12" viewBox="0 0 14 12"><path d="M1 6.5 L5 10.5 L13 1" fill="none" stroke="#b4b4b4" stroke-width="1.8"/></svg>
<div class="a t " style="left:237.5px;top:191.00px;height:22px;line-height:22px;font-size:17.5px;color:#555;font-family:'Liberation Serif',serif;font-weight:bold;"><i>f</i><span style="font-size:12.5px"><i>x</i></span></div>
<div class="a" style="left:270.5px;top:188.4px;width:1080px;height:27.8px;background:#fff;border:1px solid #c6c6c6;"></div>
<div class="a" style="left:0px;top:227.5px;width:1349px;height:636.5px;background:#fff;"></div>
<div class="a" style="left:0px;top:227.5px;width:1349px;height:19.0px;background:#e6e6e6;"></div>
<div class="a" style="left:0px;top:246.5px;width:21.5px;height:617.5px;background:#e6e6e6;"></div>
<svg class="a" style="left:0px;top:0px;" width="1349" height="900" viewBox="0 0 1349 900"><rect x="21.5" y="266.58" width="1328" height="1" fill="#d6d6d6"/><rect x="0" y="266.58" width="21.5" height="1" fill="#c3c3c3"/><rect x="21.5" y="287.16" width="1328" height="1" fill="#d6d6d6"/><rect x="0" y="287.16" width="21.5" height="1" fill="#c3c3c3"/><rect x="21.5" y="307.74" width="1328" height="1" fill="#d6d6d6"/><rect x="0" y="307.74" width="21.5" height="1" fill="#c3c3c3"/><rect x="21.5" y="328.32" width="1328" height="1" fill="#d6d6d6"/><rect x="0" y="328.32" width="21.5" height="1" fill="#c3c3c3"/><rect x="21.5" y="348.90" width="1328" height="1" fill="#d6d6d6"/><rect x="0" y="348.90" width="21.5" height="1" fill="#c3c3c3"/><rect x="21.5" y="369.48" width="1328" height="1" fill="#d6d6d6"/><rect x="0" y="369.48" width="21.5" height="1" fill="#c3c3c3"/><rect x="21.5" y="390.06" width="1328" height="1" fill="#d6d6d6"/><rect x="0" y="390.06" width="21.5" height="1" fill="#c3c3c3"/><rect x="21.5" y="410.64" width="1328" height="1" fill="#d6d6d6"/><rect x="0" y="410.64" width="21.5" height="1" fill="#c3c3c3"/><rect x="21.5" y="431.22" width="1328" height="1" fill="#d6d6d6"/><rect x="0" y="431.22" width="21.5" height="1" fill="#c3c3c3"/><rect x="21.5" y="451.80" width="1328" height="1" fill="#d6d6d6"/><rect x="0" y="451.80" width="21.5" height="1" fill="#c3c3c3"/><rect x="21.5" y="472.38" width="1328" height="1" fill="#d6d6d6"/><rect x="0" y="472.38" width="21.5" height="1" fill="#c3c3c3"/><rect x="21.5" y="492.96" width="1328" height="1" fill="#d6d6d6"/><rect x="0" y="492.96" width="21.5" height="1" fill="#c3c3c3"/><rect x="21.5" y="513.54" width="1328" height="1" fill="#d6d6d6"/><rect x="0" y="513.54" width="21.5" height="1" fill="#c3c3c3"/><rect x="21.5" y="534.12" width="1328" height="1" fill="#d6d6d6"/><rect x="0" y="534.12" width="21.5" height="1" fill="#c3c3c3"/><rect x="21.5" y="554.70" width="1328" height="1" fill="#d6d6d6"/><rect x="0" y="554.70" width="21.5" height="1" fill="#c3c3c3"/><rect x="21.5" y="575.28" width="1328" height="1" fill="#d6d6d6"/><rect x="0" y="575.28" width="21.5" height="1" fill="#c3c3c3"/><rect x="21.5" y="595.86" width="1328" height="1" fill="#d6d6d6"/><rect x="0" y="595.86" width="21.5" height="1" fill="#c3c3c3"/><rect x="21.5" y="616.44" width="1328" height="1" fill="#d6d6d6"/><rect x="0" y="616.44" width="21.5" height="1" fill="#c3c3c3"/><rect x="21.5" y="637.02" width="1328" height="1" fill="#d6d6d6"/><rect x="0" y="637.02" width="21.5" height="1" fill="#c3c3c3"/><rect x="21.5" y="657.60" width="1328" height="1" fill="#d6d6d6"/><rect x="0" y="657.60" width="21.5" height="1" fill="#c3c3c3"/><rect x="21.5" y="678.18" width="1328" height="1" fill="#d6d6d6"/><rect x="0" y="678.18" width="21.5" height="1" fill="#c3c3c3"/><rect x="21.5" y="698.76" width="1328" height="1" fill="#d6d6d6"/><rect x="0" y="698.76" width="21.5" height="1" fill="#c3c3c3"/><rect x="21.5" y="719.34" width="1328" height="1" fill="#d6d6d6"/><rect x="0" y="719.34" width="21.5" height="1" fill="#c3c3c3"/><rect x="21.5" y="739.92" width="1328" height="1" fill="#d6d6d6"/><rect x="0" y="739.92" width="21.5" height="1" fill="#c3c3c3"/><rect x="21.5" y="760.50" width="1328" height="1" fill="#d6d6d6"/><rect x="0" y="760.50" width="21.5" height="1" fill="#c3c3c3"/><rect x="21.5" y="781.08" width="1328" height="1" fill="#d6d6d6"/><rect x="0" y="781.08" width="21.5" height="1" fill="#c3c3c3"/><rect x="21.5" y="801.66" width="1328" height="1" fill="#d6d6d6"/><rect x="0" y="801.66" width="21.5" height="1" fill="#c3c3c3"/><rect x="21.5" y="822.24" width="1328" height="1" fill="#d6d6d6"/><rect x="0" y="822.24" width="21.5" height="1" fill="#c3c3c3"/><rect x="21.5" y="842.82" width="1328" height="1" fill="#d6d6d6"/><rect x="0" y="842.82" width="21.5" height="1" fill="#c3c3c3"/><rect x="159.80" y="246.5" width="1" height="617.5" fill="#d6d6d6"/><rect x="159.80" y="229.0" width="1" height="17.5" fill="#bcbcbc"/><rect x="653.50" y="246.5" width="1" height="617.5" fill="#d6d6d6"/><rect x="653.50" y="229.0" width="1" height="17.5" fill="#bcbcbc"/><rect x="800.60" y="246.5" width="1" height="617.5" fill="#d6d6d6"/><rect x="800.60" y="229.0" width="1" height="17.5" fill="#bcbcbc"/><rect x="875.00" y="246.5" width="1" height="617.5" fill="#d6d6d6"/><rect x="875.00" y="229.0" width="1" height="17.5" fill="#bcbcbc"/><rect x="947.80" y="246.5" width="1" height="617.5" fill="#d6d6d6"/><rect x="947.80" y="229.0" width="1" height="17.5" fill="#bcbcbc"/><rect x="1022.00" y="246.5" width="1" height="617.5" fill="#d6d6d6"/><rect x="1022.00" y="229.0" width="1" height="17.5" fill="#bcbcbc"/><rect x="1095.30" y="246.5" width="1" height="617.5" fill="#d6d6d6"/><rect x="1095.30" y="229.0" width="1" height="17.5" fill="#bcbcbc"/><rect x="1168.80" y="246.5" width="1" height="617.5" fill="#d6d6d6"/><rect x="1168.80" y="229.0" width="1" height="17.5" fill="#bcbcbc"/><rect x="1242.30" y="246.5" width="1" height="617.5" fill="#d6d6d6"/><rect x="1242.30" y="229.0" width="1" height="17.5" fill="#bcbcbc"/><rect x="1316.10" y="246.5" width="1" height="617.5" fill="#d6d6d6"/><rect x="1316.10" y="229.0" width="1" height="17.5" fill="#bcbcbc"/><rect x="21" y="229.0" width="1" height="635.0" fill="#bcbcbc"/><rect x="0" y="245.8" width="1349" height="1.2" fill="#b4b4b4"/></svg>
<div class="a" style="left:948.3px;top:228.5px;width:74.2px;height:18.0px;background:#d2d2d2;border-bottom:2px solid #217346;"></div>
<div class="a" style="left:0px;top:370.48px;width:21.8px;height:19.58px;background:#d2d2d2;border-right:1.5px solid #217346;"></div>
<svg class="a" style="left:6.5px;top:232.5px;" width="13" height="12" viewBox="0 0 13 12"><path d="M13 0 V12 H0 Z" fill="#b7b7b7"/></svg>
<div class="a t " style="left:71.70px;width:40px;text-align:center;top:226.70px;height:22px;line-height:22px;font-size:15.2px;color:#444;">A</div>
<div class="a t " style="left:387.95px;width:40px;text-align:center;top:226.70px;height:22px;line-height:22px;font-size:15.2px;color:#444;">B</div>
<div class="a t " style="left:708.35px;width:40px;text-align:center;top:226.70px;height:22px;line-height:22px;font-size:15.2px;color:#444;">C</div>
<div class="a t " style="left:819.10px;width:40px;text-align:center;top:226.70px;height:22px;line-height:22px;font-size:15.2px;color:#444;">D</div>
<div class="a t " style="left:892.70px;width:40px;text-align:center;top:226.70px;height:22px;line-height:22px;font-size:15.2px;color:#444;">E</div>
<div class="a t " style="left:966.20px;width:40px;text-align:center;top:226.70px;height:22px;line-height:22px;font-size:15.2px;color:#217346;">F</div>
<div class="a t " style="left:1039.95px;width:40px;text-align:center;top:226.70px;height:22px;line-height:22px;font-size:15.2px;color:#444;">G</div>
<div class="a t " style="left:1113.35px;width:40px;text-align:center;top:226.70px;height:22px;line-height:22px;font-size:15.2px;color:#444;">H</div>
<div class="a t " style="left:1186.85px;width:40px;text-align:center;top:226.70px;height:22px;line-height:22px;font-size:15.2px;color:#444;">I</div>
<div class="a t " style="left:1260.50px;width:40px;text-align:center;top:226.70px;height:22px;line-height:22px;font-size:15.2px;color:#444;">J</div>
<div class="a t " style="left:-8.60px;width:30px;text-align:center;top:247.29px;height:20px;line-height:20px;font-size:15.2px;color:#444;letter-spacing:-0.75px;">1</div>
<div class="a t " style="left:-8.60px;width:30px;text-align:center;top:267.87px;height:20px;line-height:20px;font-size:15.2px;color:#444;letter-spacing:-0.75px;">2</div>
<div class="a t " style="left:-8.60px;width:30px;text-align:center;top:288.45px;height:20px;line-height:20px;font-size:15.2px;color:#444;letter-spacing:-0.75px;">3</div>
<div class="a t " style="left:-8.60px;width:30px;text-align:center;top:309.03px;height:20px;line-height:20px;font-size:15.2px;color:#444;letter-spacing:-0.75px;">4</div>
<div class="a t " style="left:-8.60px;width:30px;text-align:center;top:329.61px;height:20px;line-height:20px;font-size:15.2px;color:#444;letter-spacing:-0.75px;">5</div>
<div class="a t " style="left:-8.60px;width:30px;text-align:center;top:350.19px;height:20px;line-height:20px;font-size:15.2px;color:#444;letter-spacing:-0.75px;">6</div>
<div class="a t " style="left:-8.60px;width:30px;text-align:center;top:370.77px;height:20px;line-height:20px;font-size:15.2px;color:#217346;letter-spacing:-0.75px;">7</div>
<div class="a t " style="left:-8.60px;width:30px;text-align:center;top:391.35px;height:20px;line-height:20px;font-size:15.2px;color:#444;letter-spacing:-0.75px;">8</div>
<div class="a t " style="left:-8.60px;width:30px;text-align:center;top:411.93px;height:20px;line-height:20px;font-size:15.2px;color:#444;letter-spacing:-0.75px;">9</div>
<div class="a t " style="left:-7.30px;width:30px;text-align:center;top:432.51px;height:20px;line-height:20px;font-size:15.2px;color:#444;letter-spacing:-0.75px;">10</div>
<div class="a t " style="left:-7.30px;width:30px;text-align:center;top:453.09px;height:20px;line-height:20px;font-size:15.2px;color:#444;letter-spacing:-0.75px;">11</div>
<div class="a t " style="left:-7.30px;width:30px;text-align:center;top:473.67px;height:20px;line-height:20px;font-size:15.2px;color:#444;letter-spacing:-0.75px;">12</div>
<div class="a t " style="left:-7.30px;width:30px;text-align:center;top:494.25px;height:20px;line-height:20px;font-size:15.2px;color:#444;letter-spacing:-0.75px;">13</div>
<div class="a t " style="left:-7.30px;width:30px;text-align:center;top:514.83px;height:20px;line-height:20px;font-size:15.2px;color:#444;letter-spacing:-0.75px;">14</div>
<div class="a t " style="left:-7.30px;width:30px;text-align:center;top:535.41px;height:20px;line-height:20px;font-size:15.2px;color:#444;letter-spacing:-0.75px;">15</div>
<div class="a t " style="left:-7.30px;width:30px;text-align:center;top:555.99px;height:20px;line-height:20px;font-size:15.2px;color:#444;letter-spacing:-0.75px;">16</div>
<div class="a t " style="left:-7.30px;width:30px;text-align:center;top:576.57px;height:20px;line-height:20px;font-size:15.2px;color:#444;letter-spacing:-0.75px;">17</div>
<div class="a t " style="left:-7.30px;width:30px;text-align:center;top:597.15px;height:20px;line-height:20px;font-size:15.2px;color:#444;letter-spacing:-0.75px;">18</div>
<div class="a t " style="left:-7.30px;width:30px;text-align:center;top:617.73px;height:20px;line-height:20px;font-size:15.2px;color:#444;letter-spacing:-0.75px;">19</div>
<div class="a t " style="left:-7.30px;width:30px;text-align:center;top:638.31px;height:20px;line-height:20px;font-size:15.2px;color:#444;letter-spacing:-0.75px;">20</div>
<div class="a t " style="left:-7.30px;width:30px;text-align:center;top:658.89px;height:20px;line-height:20px;font-size:15.2px;color:#444;letter-spacing:-0.75px;">21</div>
<div class="a t " style="left:-7.30px;width:30px;text-align:center;top:679.47px;height:20px;line-height:20px;font-size:15.2px;color:#444;letter-spacing:-0.75px;">22</div>
<div class="a t " style="left:-7.30px;width:30px;text-align:center;top:700.05px;height:20px;line-height:20px;font-size:15.2px;color:#444;letter-spacing:-0.75px;">23</div>
<div class="a t " style="left:-7.30px;width:30px;text-align:center;top:720.63px;height:20px;line-height:20px;font-size:15.2px;color:#444;letter-spacing:-0.75px;">24</div>
<div class="a t " style="left:-7.30px;width:30px;text-align:center;top:741.21px;height:20px;line-height:20px;font-size:15.2px;color:#444;letter-spacing:-0.75px;">25</div>
<div class="a t " style="left:-7.30px;width:30px;text-align:center;top:761.79px;height:20px;line-height:20px;font-size:15.2px;color:#444;letter-spacing:-0.75px;">26</div>
<div class="a t " style="left:-7.30px;width:30px;text-align:center;top:782.37px;height:20px;line-height:20px;font-size:15.2px;color:#444;letter-spacing:-0.75px;">27</div>
<div class="a t " style="left:-7.30px;width:30px;text-align:center;top:802.95px;height:20px;line-height:20px;font-size:15.2px;color:#444;letter-spacing:-0.75px;">28</div>
<div class="a t " style="left:-7.30px;width:30px;text-align:center;top:823.53px;height:20px;line-height:20px;font-size:15.2px;color:#444;letter-spacing:-0.75px;">29</div>
<div class="a t " style="left:-7.30px;width:30px;text-align:center;top:844.11px;height:20px;line-height:20px;font-size:15.2px;color:#444;letter-spacing:-0.75px;">30</div>
<div class="a t ser" style="left:52.30px;width:80px;text-align:center;top:246.79px;height:22px;line-height:22px;font-size:15.4px;color:#000;font-weight:700;letter-spacing:1.5px;">手机</div>
<div class="a t ser" style="left:368.00px;width:80px;text-align:center;top:246.79px;height:22px;line-height:22px;font-size:15.4px;color:#000;font-weight:700;letter-spacing:1.5px;">姓名</div>
<div class="a t ser" style="left:668.00px;width:120px;text-align:center;top:246.79px;height:22px;line-height:22px;font-size:15.4px;color:#000;font-weight:700;letter-spacing:0.6px;">姓名的前缀</div>
<svg class="a" style="left:22px;top:267.58px;" width="7" height="7" viewBox="0 0 7 7"><path d="M0 0 H6.5 L0 6.5 Z" fill="#15872b"/></svg>
<div class="a t " style="left:25.6px;top:267.87px;height:20px;line-height:20px;font-size:15.2px;color:#000;letter-spacing:-0.75px;">15266</div>
<svg class="a" style="left:22px;top:288.16px;" width="7" height="7" viewBox="0 0 7 7"><path d="M0 0 H6.5 L0 6.5 Z" fill="#15872b"/></svg>
<div class="a t " style="left:25.6px;top:288.45px;height:20px;line-height:20px;font-size:15.2px;color:#000;letter-spacing:-0.75px;">13<span style="visibility:hidden">1</span>8091</div>
<svg class="a" style="left:22px;top:308.74px;" width="7" height="7" viewBox="0 0 7 7"><path d="M0 0 H6.5 L0 6.5 Z" fill="#15872b"/></svg>
<div class="a t " style="left:25.6px;top:309.03px;height:20px;line-height:20px;font-size:15.2px;color:#000;letter-spacing:-0.75px;">15<span style="visibility:hidden">1</span>5395</div>
<svg class="a" style="left:22px;top:329.32px;" width="7" height="7" viewBox="0 0 7 7"><path d="M0 0 H6.5 L0 6.5 Z" fill="#15872b"/></svg>
<div class="a t " style="left:25.6px;top:329.61px;height:20px;line-height:20px;font-size:15.2px;color:#000;letter-spacing:-0.75px;">15<span style="visibility:hidden">1</span>5422</div>
<svg class="a" style="left:22px;top:349.9px;" width="7" height="7" viewBox="0 0 7 7"><path d="M0 0 H6.5 L0 6.5 Z" fill="#15872b"/></svg>
<div class="a t " style="left:25.6px;top:350.19px;height:20px;line-height:20px;font-size:15.2px;color:#000;letter-spacing:-0.75px;">18<span style="visibility:hidden">1</span>6520</div>
<svg class="a" style="left:22px;top:370.48px;" width="7" height="7" viewBox="0 0 7 7"><path d="M0 0 H6.5 L0 6.5 Z" fill="#15872b"/></svg>
<div class="a t " style="left:25.6px;top:370.77px;height:20px;line-height:20px;font-size:15.2px;color:#000;letter-spacing:-0.75px;">15<span style="visibility:hidden">1</span>6449</div>
<svg class="a" style="left:22px;top:391.06px;" width="7" height="7" viewBox="0 0 7 7"><path d="M0 0 H6.5 L0 6.5 Z" fill="#15872b"/></svg>
<div class="a t " style="left:25.6px;top:391.35px;height:20px;line-height:20px;font-size:15.2px;color:#000;letter-spacing:-0.75px;">18<span style="visibility:hidden">1</span>6310</div>
<svg class="a" style="left:22px;top:411.64px;" width="7" height="7" viewBox="0 0 7 7"><path d="M0 0 H6.5 L0 6.5 Z" fill="#15872b"/></svg>
<div class="a t " style="left:25.6px;top:411.93px;height:20px;line-height:20px;font-size:15.2px;color:#000;letter-spacing:-0.75px;">18<span style="visibility:hidden">1</span>0655</div>
<svg class="a" style="left:22px;top:432.22px;" width="7" height="7" viewBox="0 0 7 7"><path d="M0 0 H6.5 L0 6.5 Z" fill="#15872b"/></svg>
<div class="a t " style="left:25.6px;top:432.51px;height:20px;line-height:20px;font-size:15.2px;color:#000;letter-spacing:-0.75px;">15<span style="visibility:hidden">1</span>6523</div>
<svg class="a" style="left:22px;top:452.8px;" width="7" height="7" viewBox="0 0 7 7"><path d="M0 0 H6.5 L0 6.5 Z" fill="#15872b"/></svg>
<div class="a t " style="left:25.6px;top:453.09px;height:20px;line-height:20px;font-size:15.2px;color:#000;letter-spacing:-0.75px;">13<span style="visibility:hidden">1</span>6515</div>
<svg class="a" style="left:22px;top:473.38px;" width="7" height="7" viewBox="0 0 7 7"><path d="M0 0 H6.5 L0 6.5 Z" fill="#15872b"/></svg>
<div class="a t " style="left:25.6px;top:473.67px;height:20px;line-height:20px;font-size:15.2px;color:#000;letter-spacing:-0.75px;">15<span style="visibility:hidden">1</span>1501</div>
<svg class="a" style="left:22px;top:493.96px;" width="7" height="7" viewBox="0 0 7 7"><path d="M0 0 H6.5 L0 6.5 Z" fill="#15872b"/></svg>
<div class="a t " style="left:25.6px;top:494.25px;height:20px;line-height:20px;font-size:15.2px;color:#000;letter-spacing:-0.75px;">18<span style="visibility:hidden">1</span>6926</div>
<svg class="a" style="left:22px;top:514.54px;" width="7" height="7" viewBox="0 0 7 7"><path d="M0 0 H6.5 L0 6.5 Z" fill="#15872b"/></svg>
<div class="a t " style="left:25.6px;top:514.83px;height:20px;line-height:20px;font-size:15.2px;color:#000;letter-spacing:-0.75px;">15<span style="visibility:hidden">1</span>0535</div>
<svg class="a" style="left:22px;top:535.12px;" width="7" height="7" viewBox="0 0 7 7"><path d="M0 0 H6.5 L0 6.5 Z" fill="#15872b"/></svg>
<div class="a t " style="left:25.6px;top:535.41px;height:20px;line-height:20px;font-size:15.2px;color:#000;letter-spacing:-0.75px;">13<span style="visibility:hidden">1</span>2533</div>
<svg class="a" style="left:22px;top:555.7px;" width="7" height="7" viewBox="0 0 7 7"><path d="M0 0 H6.5 L0 6.5 Z" fill="#15872b"/></svg>
<div class="a t " style="left:25.6px;top:555.99px;height:20px;line-height:20px;font-size:15.2px;color:#000;letter-spacing:-0.75px;">15<span style="visibility:hidden">1</span>6636</div>
<svg class="a" style="left:22px;top:576.28px;" width="7" height="7" viewBox="0 0 7 7"><path d="M0 0 H6.5 L0 6.5 Z" fill="#15872b"/></svg>
<div class="a t " style="left:25.6px;top:576.57px;height:20px;line-height:20px;font-size:15.2px;color:#000;letter-spacing:-0.75px;">15<span style="visibility:hidden">1</span>0639</div>
<svg class="a" style="left:22px;top:596.86px;" width="7" height="7" viewBox="0 0 7 7"><path d="M0 0 H6.5 L0 6.5 Z" fill="#15872b"/></svg>
<div class="a t " style="left:25.6px;top:597.15px;height:20px;line-height:20px;font-size:15.2px;color:#000;letter-spacing:-0.75px;">17<span style="visibility:hidden">1</span>6105</div>
<svg class="a" style="left:22px;top:617.44px;" width="7" height="7" viewBox="0 0 7 7"><path d="M0 0 H6.5 L0 6.5 Z" fill="#15872b"/></svg>
<div class="a t " style="left:25.6px;top:617.73px;height:20px;line-height:20px;font-size:15.2px;color:#000;letter-spacing:-0.75px;">15<span style="visibility:hidden">1</span>2894</div>
<svg class="a" style="left:22px;top:638.02px;" width="7" height="7" viewBox="0 0 7 7"><path d="M0 0 H6.5 L0 6.5 Z" fill="#15872b"/></svg>
<div class="a t " style="left:25.6px;top:638.31px;height:20px;line-height:20px;font-size:15.2px;color:#000;letter-spacing:-0.75px;">13<span style="visibility:hidden">1</span>2076</div>
<svg class="a" style="left:22px;top:658.6px;" width="7" height="7" viewBox="0 0 7 7"><path d="M0 0 H6.5 L0 6.5 Z" fill="#15872b"/></svg>
<div class="a t " style="left:25.6px;top:658.89px;height:20px;line-height:20px;font-size:15.2px;color:#000;letter-spacing:-0.75px;">15<span style="visibility:hidden">1</span>6553</div>
<svg class="a" style="left:22px;top:679.18px;" width="7" height="7" viewBox="0 0 7 7"><path d="M0 0 H6.5 L0 6.5 Z" fill="#15872b"/></svg>
<div class="a t " style="left:25.6px;top:679.47px;height:20px;line-height:20px;font-size:15.2px;color:#000;letter-spacing:-0.75px;">15<span style="visibility:hidden">1</span>6431</div>
<svg class="a" style="left:22px;top:699.76px;" width="7" height="7" viewBox="0 0 7 7"><path d="M0 0 H6.5 L0 6.5 Z" fill="#15872b"/></svg>
<div class="a t " style="left:25.6px;top:700.05px;height:20px;line-height:20px;font-size:15.2px;color:#000;letter-spacing:-0.75px;">13<span style="visibility:hidden">1</span>6958</div>
<svg class="a" style="left:22px;top:720.34px;" width="7" height="7" viewBox="0 0 7 7"><path d="M0 0 H6.5 L0 6.5 Z" fill="#15872b"/></svg>
<div class="a t " style="left:25.6px;top:720.63px;height:20px;line-height:20px;font-size:15.2px;color:#000;letter-spacing:-0.75px;">18<span style="visibility:hidden">1</span>3835</div>
<svg class="a" style="left:22px;top:740.92px;" width="7" height="7" viewBox="0 0 7 7"><path d="M0 0 H6.5 L0 6.5 Z" fill="#15872b"/></svg>
<div class="a t " style="left:25.6px;top:741.21px;height:20px;line-height:20px;font-size:15.2px;color:#000;letter-spacing:-0.75px;">15<span style="visibility:hidden">1</span>7525</div>
<svg class="a" style="left:22px;top:761.5px;" width="7" height="7" viewBox="0 0 7 7"><path d="M0 0 H6.5 L0 6.5 Z" fill="#15872b"/></svg>
<div class="a t " style="left:25.6px;top:761.79px;height:20px;line-height:20px;font-size:15.2px;color:#000;letter-spacing:-0.75px;">19<span style="visibility:hidden">1</span>8655</div>
<svg class="a" style="left:22px;top:782.08px;" width="7" height="7" viewBox="0 0 7 7"><path d="M0 0 H6.5 L0 6.5 Z" fill="#15872b"/></svg>
<div class="a t " style="left:25.6px;top:782.37px;height:20px;line-height:20px;font-size:15.2px;color:#000;letter-spacing:-0.75px;">18<span style="visibility:hidden">1</span>5318</div>
<svg class="a" style="left:22px;top:802.66px;" width="7" height="7" viewBox="0 0 7 7"><path d="M0 0 H6.5 L0 6.5 Z" fill="#15872b"/></svg>
<div class="a t " style="left:25.6px;top:802.95px;height:20px;line-height:20px;font-size:15.2px;color:#000;letter-spacing:-0.75px;">13<span style="visibility:hidden">1</span>6839</div>
<svg class="a" style="left:22px;top:823.24px;" width="7" height="7" viewBox="0 0 7 7"><path d="M0 0 H6.5 L0 6.5 Z" fill="#15872b"/></svg>
<div class="a t " style="left:25.6px;top:823.53px;height:20px;line-height:20px;font-size:15.2px;color:#000;letter-spacing:-0.75px;">17<span style="visibility:hidden">1</span>6235</div>
<svg class="a" style="left:22px;top:843.82px;" width="7" height="7" viewBox="0 0 7 7"><path d="M0 0 H6.5 L0 6.5 Z" fill="#15872b"/></svg>
<div class="a t " style="left:25.6px;top:844.11px;height:20px;line-height:20px;font-size:15.2px;color:#000;letter-spacing:-0.75px;">16<span style="visibility:hidden">1</span>78663290</div>
<div class="a t lnk" style="left:163px;top:267.47px;height:20px;line-height:20px;font-size:15.29px;color:#0000ff;">济南市济阳区恒喜软件销售行（个体工商户）</div>
<div class="a t lnk" style="left:163px;top:288.05px;height:20px;line-height:20px;font-size:15.29px;color:#0000ff;">济宁市金脉智学软件销售服务馆（个体工商户）</div>
<div class="a t lnk" style="left:163px;top:308.63px;height:20px;line-height:20px;font-size:15.29px;color:#0000ff;">临沂高新区硕博软件销售服务中心（个体工商户）</div>
<div class="a t lnk" style="left:163px;top:329.21px;height:20px;line-height:20px;font-size:15.29px;color:#0000ff;">济南霖婷软件技术有限公司</div>
<div class="a t lnk" style="left:163px;top:349.79px;height:20px;line-height:20px;font-size:15.29px;color:#0000ff;">济南意驱百臻供应链有限公司</div>
<div class="a t lnk" style="left:163px;top:370.37px;height:20px;line-height:20px;font-size:15.29px;color:#0000ff;">滨州市虎印电子信息部（个人独资）</div>
<div class="a t lnk" style="left:163px;top:390.95px;height:20px;line-height:20px;font-size:15.29px;color:#0000ff;">聊城亿企软件科技有限公司</div>
<div class="a t lnk" style="left:163px;top:411.53px;height:20px;line-height:20px;font-size:15.29px;color:#0000ff;">潍坊优运控制系统有限公司济南分公司</div>
<div class="a t lnk" style="left:163px;top:432.11px;height:20px;line-height:20px;font-size:15.29px;color:#0000ff;">济南锦钰田商贸有限公司</div>
<div class="a t lnk" style="left:163px;top:452.69px;height:20px;line-height:20px;font-size:15.29px;color:#0000ff;">青岛区海心小温商贸中心（个体工商户）</div>
<div class="a t lnk" style="left:163px;top:473.27px;height:20px;line-height:20px;font-size:15.29px;color:#0000ff;">聊城维斯顿信息科技有限公司</div>
<div class="a t lnk" style="left:163px;top:493.85px;height:20px;line-height:20px;font-size:15.29px;color:#0000ff;">聊城市旺泰教育咨询有限公司</div>
<div class="a t lnk" style="left:163px;top:514.43px;height:20px;line-height:20px;font-size:15.29px;color:#0000ff;">菏泽区启远货运信息中心（个体工商户）</div>
<div class="a t lnk" style="left:163px;top:535.01px;height:20px;line-height:20px;font-size:15.29px;color:#0000ff;">安华融鑫（济南）企业管理咨询有限公司</div>
<div class="a t lnk" style="left:163px;top:555.59px;height:20px;line-height:20px;font-size:15.29px;color:#0000ff;">鼎玉（济南）知识产权服务有限公司</div>
<div class="a t lnk" style="left:163px;top:576.17px;height:20px;line-height:20px;font-size:15.29px;color:#0000ff;">济阳县佳途汽车配件商行（个体工商户）</div>
<div class="a t lnk" style="left:163px;top:596.75px;height:20px;line-height:20px;font-size:15.29px;color:#0000ff;">济南艾诺技术有限公司济南分公司</div>
<div class="a t lnk" style="left:163px;top:617.33px;height:20px;line-height:20px;font-size:15.29px;color:#0000ff;">聊城文华信息技术有限公司</div>
<div class="a t lnk" style="left:163px;top:637.91px;height:20px;line-height:20px;font-size:15.29px;color:#0000ff;">枣庄薛城区尚元电子产品销售中心（个体工商户）</div>
<div class="a t lnk" style="left:163px;top:658.49px;height:20px;line-height:20px;font-size:15.29px;color:#0000ff;">淄博诗禾教育科技有限公司</div>
<div class="a t lnk" style="left:163px;top:679.07px;height:20px;line-height:20px;font-size:15.29px;color:#0000ff;">潍坊市亿成科技网络有限公司</div>
<div class="a t lnk" style="left:163px;top:699.65px;height:20px;line-height:20px;font-size:15.29px;color:#0000ff;">济南功夫深供应链管理有限公司</div>
<div class="a t lnk" style="left:163px;top:720.23px;height:20px;line-height:20px;font-size:15.29px;color:#0000ff;">潍坊市世纪伟图科技开发有限公司济南分公司</div>
<div class="a t lnk" style="left:163px;top:740.81px;height:20px;line-height:20px;font-size:15.29px;color:#0000ff;">济南逸云探索科技有限公司</div>
<div class="a t lnk" style="left:163px;top:761.39px;height:20px;line-height:20px;font-size:15.29px;color:#0000ff;">淄博张店怡生图书经营部（个人独资）</div>
<div class="a t lnk" style="left:163px;top:781.97px;height:20px;line-height:20px;font-size:15.29px;color:#0000ff;">山东博远视讯信息技术有限公司临沂第一分公司</div>
<div class="a t lnk" style="left:163px;top:802.55px;height:20px;line-height:20px;font-size:15.29px;color:#0000ff;">临沂区聚思福来教育与技咨询工作室（个体工商户）</div>
<div class="a t lnk" style="left:163px;top:823.13px;height:20px;line-height:20px;font-size:15.29px;color:#0000ff;">临沂妙想网络科技中心（个人独资）</div>
<div class="a t lnk" style="left:163px;top:843.71px;height:20px;line-height:20px;font-size:15.29px;color:#0000ff;">济南源木轩信息咨询有限公司</div>
<div class="a t ser" style="left:657px;top:268.57px;height:20px;line-height:20px;font-size:15.4px;color:#000;">张涛<span style="display:inline-block;width:6.4px;text-align:center">-</span>软件销售</div>
<div class="a t ser" style="left:657px;top:289.15px;height:20px;line-height:20px;font-size:15.4px;color:#000;">徐晓玲<span style="display:inline-block;width:6.4px;text-align:center">-</span>软件销售</div>
<div class="a t ser" style="left:657px;top:309.73px;height:20px;line-height:20px;font-size:15.4px;color:#000;">孙立军<span style="display:inline-block;width:6.4px;text-align:center">-</span>软件销售</div>
<div class="a t ser" style="left:657px;top:330.31px;height:20px;line-height:20px;font-size:15.4px;color:#000;">庞传安<span style="display:inline-block;width:6.4px;text-align:center">-</span>软件销售</div>
<div class="a t ser" style="left:657px;top:350.89px;height:20px;line-height:20px;font-size:15.4px;color:#000;">庞传安<span style="display:inline-block;width:6.4px;text-align:center">-</span>软件销售</div>
<div class="a t ser" style="left:657px;top:371.47px;height:20px;line-height:20px;font-size:15.4px;color:#000;">庞庆<span style="display:inline-block;width:6.4px;text-align:center">-</span>软件销售</div>
<div class="a t ser" style="left:657px;top:392.05px;height:20px;line-height:20px;font-size:15.4px;color:#000;">庞其贤<span style="display:inline-block;width:6.4px;text-align:center">-</span>软件销售</div>
<div class="a t ser" style="left:657px;top:412.63px;height:20px;line-height:20px;font-size:15.4px;color:#000;">庞明义<span style="display:inline-block;width:6.4px;text-align:center">-</span>软件销售</div>
<div class="a t ser" style="left:657px;top:433.21px;height:20px;line-height:20px;font-size:15.4px;color:#000;">管梦梦<span style="display:inline-block;width:6.4px;text-align:center">-</span>软件销售</div>
<div class="a t ser" style="left:657px;top:453.79px;height:20px;line-height:20px;font-size:15.4px;color:#000;">李洋<span style="display:inline-block;width:6.4px;text-align:center">-</span>软件销售</div>
<div class="a t ser" style="left:657px;top:474.37px;height:20px;line-height:20px;font-size:15.4px;color:#000;">林兆柱<span style="display:inline-block;width:6.4px;text-align:center">-</span>软件销售</div>
<div class="a t ser" style="left:657px;top:494.95px;height:20px;line-height:20px;font-size:15.4px;color:#000;">陈元花<span style="display:inline-block;width:6.4px;text-align:center">-</span>软件销售</div>
<div class="a t ser" style="left:657px;top:515.53px;height:20px;line-height:20px;font-size:15.4px;color:#000;">王金艳<span style="display:inline-block;width:6.4px;text-align:center">-</span>软件销售</div>
<div class="a t ser" style="left:657px;top:536.11px;height:20px;line-height:20px;font-size:15.4px;color:#000;">张金雯<span style="display:inline-block;width:6.4px;text-align:center">-</span>软件销售</div>
<div class="a t ser" style="left:657px;top:556.69px;height:20px;line-height:20px;font-size:15.4px;color:#000;">王斌<span style="display:inline-block;width:6.4px;text-align:center">-</span>软件销售</div>
<div class="a t ser" style="left:657px;top:577.27px;height:20px;line-height:20px;font-size:15.4px;color:#000;">盖廷秀<span style="display:inline-block;width:6.4px;text-align:center">-</span>软件销售</div>
<div class="a t ser" style="left:657px;top:597.85px;height:20px;line-height:20px;font-size:15.4px;color:#000;">徐永昭<span style="display:inline-block;width:6.4px;text-align:center">-</span>软件销售</div>
<div class="a t ser" style="left:657px;top:618.43px;height:20px;line-height:20px;font-size:15.4px;color:#000;">张云铭<span style="display:inline-block;width:6.4px;text-align:center">-</span>软件销售</div>
<div class="a t ser" style="left:657px;top:639.01px;height:20px;line-height:20px;font-size:15.4px;color:#000;">王利<span style="display:inline-block;width:6.4px;text-align:center">-</span>软件销售</div>
<div class="a t ser" style="left:657px;top:659.59px;height:20px;line-height:20px;font-size:15.4px;color:#000;">王洋姣<span style="display:inline-block;width:6.4px;text-align:center">-</span>软件销售</div>
<div class="a t ser" style="left:657px;top:680.17px;height:20px;line-height:20px;font-size:15.4px;color:#000;">胡胜兰<span style="display:inline-block;width:6.4px;text-align:center">-</span>软件销售</div>
<div class="a t ser" style="left:657px;top:700.75px;height:20px;line-height:20px;font-size:15.4px;color:#000;">王勇乐<span style="display:inline-block;width:6.4px;text-align:center">-</span>软件销售</div>
<div class="a t ser" style="left:657px;top:721.33px;height:20px;line-height:20px;font-size:15.4px;color:#000;">向玉娟<span style="display:inline-block;width:6.4px;text-align:center">-</span>软件销售</div>
<div class="a t ser" style="left:657px;top:741.91px;height:20px;line-height:20px;font-size:15.4px;color:#000;">李永举<span style="display:inline-block;width:6.4px;text-align:center">-</span>软件销售</div>
<div class="a t ser" style="left:657px;top:762.49px;height:20px;line-height:20px;font-size:15.4px;color:#000;">刘怡生<span style="display:inline-block;width:6.4px;text-align:center">-</span>软件销售</div>
<div class="a t ser" style="left:657px;top:783.07px;height:20px;line-height:20px;font-size:15.4px;color:#000;">陈晓辉<span style="display:inline-block;width:6.4px;text-align:center">-</span>软件销售</div>
<div class="a t ser" style="left:657px;top:803.65px;height:20px;line-height:20px;font-size:15.4px;color:#000;">修传俊<span style="display:inline-block;width:6.4px;text-align:center">-</span>软件销售</div>
<div class="a t ser" style="left:657px;top:824.23px;height:20px;line-height:20px;font-size:15.4px;color:#000;">刘广晓<span style="display:inline-block;width:6.4px;text-align:center">-</span>软件销售</div>
<div class="a t ser" style="left:657px;top:844.81px;height:20px;line-height:20px;font-size:15.4px;color:#000;">魏庆晨<span style="display:inline-block;width:6.4px;text-align:center">-</span>软件销售</div>
<div class="a" style="left:36.4px;top:286.15999999999997px;width:11.8px;height:582.84px;background:#fff;border-radius:4px;z-index:5;"></div>
<div class="a" style="left:59.9px;top:269.08px;width:7.9px;height:575.24px;background:#fff;border-radius:3px;z-index:5;"></div>
<div class="a" style="left:79px;top:269.08px;width:37px;height:430.18px;background:#fff;border-radius:2px;z-index:5;"></div>
<div class="a" style="left:79px;top:697.26px;width:29.5px;height:147.06px;background:#fff;border-radius:2px;z-index:5;"></div>
<svg class="a" style="left:0px;top:0px;z-index:6;" width="130" height="900" viewBox="0 0 130 900"><rect x="68" y="277.1" width="40" height="11" fill="#e2e2e2"/><rect x="84" y="277.1" width="12" height="11" fill="#d6d6d6"/><rect x="80" y="283.7" width="28" height="20.6" fill="#ebebeb"/><rect x="81.5" y="291.2" width="9.1" height="10.5" fill="#bdbdbd"/><rect x="90.3" y="291.2" width="9.1" height="10.5" fill="#c9c9c9"/><rect x="99.2" y="291.2" width="9.1" height="10.5" fill="#d0d0d0"/><rect x="80" y="304.2" width="28" height="20.6" fill="#ebebeb"/><rect x="81.5" y="311.7" width="9.1" height="10.5" fill="#c0c0c0"/><rect x="90.3" y="311.7" width="9.1" height="10.5" fill="#c0c0c0"/><rect x="99.2" y="311.7" width="9.1" height="10.5" fill="#c0c0c0"/><rect x="80" y="324.8" width="28" height="20.6" fill="#ebebeb"/><rect x="81.5" y="332.3" width="9.1" height="10.5" fill="#bdbdbd"/><rect x="90.3" y="332.3" width="9.1" height="10.5" fill="#c0c0c0"/><rect x="99.2" y="332.3" width="9.1" height="10.5" fill="#c9c9c9"/><rect x="80" y="345.4" width="28" height="20.6" fill="#ebebeb"/><rect x="81.5" y="352.9" width="9.1" height="10.5" fill="#c0c0c0"/><rect x="90.3" y="352.9" width="9.1" height="10.5" fill="#c0c0c0"/><rect x="99.2" y="352.9" width="9.1" height="10.5" fill="#d0d0d0"/><rect x="80" y="366.0" width="28" height="20.6" fill="#ebebeb"/><rect x="81.5" y="373.5" width="9.1" height="10.5" fill="#d0d0d0"/><rect x="90.3" y="373.5" width="9.1" height="10.5" fill="#c0c0c0"/><rect x="99.2" y="373.5" width="9.1" height="10.5" fill="#c9c9c9"/><rect x="80" y="386.6" width="28" height="20.6" fill="#ebebeb"/><rect x="81.5" y="394.1" width="9.1" height="10.5" fill="#c0c0c0"/><rect x="90.3" y="394.1" width="9.1" height="10.5" fill="#d0d0d0"/><rect x="99.2" y="394.1" width="9.1" height="10.5" fill="#c0c0c0"/><rect x="80" y="407.1" width="28" height="20.6" fill="#ebebeb"/><rect x="81.5" y="414.6" width="9.1" height="10.5" fill="#c0c0c0"/><rect x="90.3" y="414.6" width="9.1" height="10.5" fill="#c9c9c9"/><rect x="99.2" y="414.6" width="9.1" height="10.5" fill="#c0c0c0"/><rect x="80" y="427.7" width="28" height="20.6" fill="#ebebeb"/><rect x="81.5" y="435.2" width="9.1" height="10.5" fill="#c8c8c8"/><rect x="90.3" y="435.2" width="9.1" height="10.5" fill="#cfcfcf"/><rect x="99.2" y="435.2" width="9.1" height="10.5" fill="#d6d6d6"/><rect x="80" y="448.3" width="28" height="20.6" fill="#ebebeb"/><rect x="81.5" y="455.8" width="9.1" height="10.5" fill="#cfcfcf"/><rect x="90.3" y="455.8" width="9.1" height="10.5" fill="#d6d6d6"/><rect x="99.2" y="455.8" width="9.1" height="10.5" fill="#dcdcdc"/><rect x="80" y="468.9" width="28" height="20.6" fill="#ebebeb"/><rect x="81.5" y="476.4" width="9.1" height="10.5" fill="#c8c8c8"/><rect x="90.3" y="476.4" width="9.1" height="10.5" fill="#d6d6d6"/><rect x="99.2" y="476.4" width="9.1" height="10.5" fill="#cfcfcf"/><rect x="78" y="489.5" width="30" height="20.6" fill="#ebebeb"/><rect x="79.5" y="497.0" width="9.8" height="10.5" fill="#dcdcdc"/><rect x="89.0" y="497.0" width="9.8" height="10.5" fill="#d6d6d6"/><rect x="98.5" y="497.0" width="9.8" height="10.5" fill="#cfcfcf"/><rect x="78" y="510.0" width="30" height="20.6" fill="#ebebeb"/><rect x="79.5" y="517.5" width="9.8" height="10.5" fill="#d6d6d6"/><rect x="89.0" y="517.5" width="9.8" height="10.5" fill="#dcdcdc"/><rect x="98.5" y="517.5" width="9.8" height="10.5" fill="#cfcfcf"/><rect x="78" y="530.6" width="30" height="20.6" fill="#ebebeb"/><rect x="79.5" y="538.1" width="9.8" height="10.5" fill="#cfcfcf"/><rect x="89.0" y="538.1" width="9.8" height="10.5" fill="#cfcfcf"/><rect x="98.5" y="538.1" width="9.8" height="10.5" fill="#d6d6d6"/><rect x="75" y="551.2" width="33" height="20.6" fill="#ebebeb"/><rect x="78.0" y="558.7" width="10.3" height="10.5" fill="#d0d0d0"/><rect x="88.0" y="558.7" width="10.3" height="10.5" fill="#d0d0d0"/><rect x="98.0" y="558.7" width="10.3" height="10.5" fill="#bdbdbd"/><rect x="72.5" y="571.8" width="35.5" height="20.6" fill="#ebebeb"/><rect x="75.5" y="579.3" width="11.1" height="10.5" fill="#d0d0d0"/><rect x="86.3" y="579.3" width="11.1" height="10.5" fill="#d0d0d0"/><rect x="97.2" y="579.3" width="11.1" height="10.5" fill="#bdbdbd"/><rect x="72.5" y="592.4" width="35.5" height="20.6" fill="#ebebeb"/><rect x="75.5" y="599.9" width="11.1" height="10.5" fill="#bdbdbd"/><rect x="86.3" y="599.9" width="11.1" height="10.5" fill="#c9c9c9"/><rect x="97.2" y="599.9" width="11.1" height="10.5" fill="#c9c9c9"/><rect x="72.5" y="612.9" width="35.5" height="20.6" fill="#ebebeb"/><rect x="75.5" y="620.4" width="11.1" height="10.5" fill="#c9c9c9"/><rect x="86.3" y="620.4" width="11.1" height="10.5" fill="#c0c0c0"/><rect x="97.2" y="620.4" width="11.1" height="10.5" fill="#bdbdbd"/><rect x="72.5" y="633.5" width="35.5" height="20.6" fill="#ebebeb"/><rect x="75.5" y="641.0" width="11.1" height="10.5" fill="#d0d0d0"/><rect x="86.3" y="641.0" width="11.1" height="10.5" fill="#bdbdbd"/><rect x="97.2" y="641.0" width="11.1" height="10.5" fill="#d0d0d0"/><rect x="72.5" y="654.1" width="35.5" height="20.6" fill="#ebebeb"/><rect x="75.5" y="661.6" width="11.1" height="10.5" fill="#bdbdbd"/><rect x="86.3" y="661.6" width="11.1" height="10.5" fill="#c0c0c0"/><rect x="97.2" y="661.6" width="11.1" height="10.5" fill="#c0c0c0"/><rect x="72.5" y="674.7" width="35.5" height="20.6" fill="#ebebeb"/><rect x="75.5" y="682.2" width="11.1" height="10.5" fill="#d0d0d0"/><rect x="86.3" y="682.2" width="11.1" height="10.5" fill="#c9c9c9"/><rect x="97.2" y="682.2" width="11.1" height="10.5" fill="#bdbdbd"/><rect x="72.5" y="695.3" width="35.5" height="20.6" fill="#ebebeb"/><rect x="75.5" y="702.8" width="11.1" height="10.5" fill="#c9c9c9"/><rect x="86.3" y="702.8" width="11.1" height="10.5" fill="#d0d0d0"/><rect x="97.2" y="702.8" width="11.1" height="10.5" fill="#d0d0d0"/><rect x="72.5" y="715.8" width="35.5" height="20.6" fill="#ebebeb"/><rect x="75.5" y="723.3" width="11.1" height="10.5" fill="#c0c0c0"/><rect x="86.3" y="723.3" width="11.1" height="10.5" fill="#c0c0c0"/><rect x="97.2" y="723.3" width="11.1" height="10.5" fill="#bdbdbd"/><rect x="72.5" y="736.4" width="35.5" height="20.6" fill="#ebebeb"/><rect x="75.5" y="743.9" width="11.1" height="10.5" fill="#bdbdbd"/><rect x="86.3" y="743.9" width="11.1" height="10.5" fill="#bdbdbd"/><rect x="97.2" y="743.9" width="11.1" height="10.5" fill="#d0d0d0"/><rect x="72.5" y="757.0" width="35.5" height="20.6" fill="#ebebeb"/><rect x="75.5" y="764.5" width="11.1" height="10.5" fill="#d0d0d0"/><rect x="86.3" y="764.5" width="11.1" height="10.5" fill="#c0c0c0"/><rect x="97.2" y="764.5" width="11.1" height="10.5" fill="#c0c0c0"/><rect x="72.5" y="777.6" width="35.5" height="20.6" fill="#ebebeb"/><rect x="75.5" y="785.1" width="11.1" height="10.5" fill="#bdbdbd"/><rect x="86.3" y="785.1" width="11.1" height="10.5" fill="#d0d0d0"/><rect x="97.2" y="785.1" width="11.1" height="10.5" fill="#c0c0c0"/><rect x="72.5" y="798.2" width="35.5" height="20.6" fill="#ebebeb"/><rect x="75.5" y="805.7" width="11.1" height="10.5" fill="#c0c0c0"/><rect x="86.3" y="805.7" width="11.1" height="10.5" fill="#bdbdbd"/><rect x="97.2" y="805.7" width="11.1" height="10.5" fill="#d0d0d0"/><rect x="72.5" y="818.7" width="35.5" height="20.6" fill="#ebebeb"/><rect x="75.5" y="826.2" width="11.1" height="10.5" fill="#bdbdbd"/><rect x="86.3" y="826.2" width="11.1" height="10.5" fill="#d0d0d0"/><rect x="97.2" y="826.2" width="11.1" height="10.5" fill="#bdbdbd"/></svg>
<div class="a" style="left:70px;top:855.3199999999999px;width:40px;height:7.78px;background:#fff;border-radius:2px;z-index:5;"></div>
<div class="a" style="left:160.9px;top:269.08px;width:3.5px;height:577.24px;background:#fff;border-radius:1px;z-index:5;"></div>
<div class="a" style="left:166.7px;top:269.08px;width:7.1px;height:577.24px;background:#fff;border-radius:3px;z-index:5;"></div>
<div class="a" style="left:184.6px;top:269.08px;width:8.2px;height:577.24px;background:#fff;border-radius:3px;z-index:5;"></div>
<div class="a" style="left:219.7px;top:269.08px;width:8.1px;height:577.24px;background:#fff;border-radius:3px;z-index:5;"></div>
<div class="a" style="left:270.8px;top:269.08px;width:7.7px;height:577.24px;background:#fff;border-radius:3px;z-index:5;"></div>
<div class="a" style="left:300.5px;top:269.08px;width:14.7px;height:600.92px;background:#fff;border-radius:4px;z-index:5;"></div>
<div class="a" style="left:345.7px;top:281.65999999999997px;width:7.9px;height:564.66px;background:#fff;border-radius:3px;z-index:5;"></div>
<div class="a" style="left:337.5px;top:281.65999999999997px;width:5.4px;height:564.66px;background:#fff;border-radius:2px;z-index:5;"></div>
<div class="a" style="left:166.7px;top:269.08px;width:26.1px;height:8.5px;background:#fff;border-radius:3px;z-index:5;"></div>
<div class="a" style="left:219.7px;top:269.08px;width:58.8px;height:9.0px;background:#fff;border-radius:3px;z-index:5;"></div>
<div class="a" style="left:160.9px;top:843.3199999999999px;width:31.9px;height:9.0px;background:#fff;border-radius:2px;z-index:5;"></div>
<div class="a" style="left:222px;top:845.8199999999999px;width:54px;height:6.0px;background:#fff;border-radius:2px;z-index:5;"></div>
<div class="a" style="left:338px;top:845.3199999999999px;width:15px;height:7.0px;background:#fff;border-radius:3px;z-index:5;"></div>
<div class="a" style="left:664px;top:283.08px;width:8.7px;height:589.92px;background:#fff;border-radius:4px;z-index:5;"></div>
<div class="a" style="left:677.4px;top:283.08px;width:8.1px;height:584.92px;background:#fff;border-radius:4px;z-index:5;"></div>
<div class="a" style="left:720.8px;top:283.08px;width:8.1px;height:570.24px;background:#fff;border-radius:3px;z-index:5;"></div>
<div class="a" style="left:746px;top:283.08px;width:9.6px;height:570.24px;background:#fff;border-radius:3px;z-index:5;"></div>
<div class="a" style="left:672.7px;top:286.65999999999997px;width:4.7px;height:2.0px;background:#fff;border-radius:0px;z-index:5;"></div>
<div class="a" style="left:672px;top:268.08px;width:18px;height:6.0px;background:#fff;border-radius:2px;z-index:5;"></div>
<div class="a" style="left:727px;top:268.08px;width:19px;height:6.0px;background:#fff;border-radius:2px;z-index:5;"></div>
<div class="a" style="left:722px;top:854.3199999999999px;width:34px;height:8.58px;background:#fff;border-radius:2px;z-index:5;"></div>
<div class="a" style="left:947.3px;top:368.98px;width:76.2px;height:22.58px;border:2px solid #217346;"></div>
<div class="a" style="left:1020.5px;top:388.06px;width:5px;height:5px;background:#217346;border:1px solid #fff;"></div>
<svg class="a" style="left:0px;top:0px;" width="1349" height="900" viewBox="0 0 1349 900"><rect x="361.3" y="236.3" width="106.8" height="32.7" rx="2.5" fill="none" stroke="#f3281d" stroke-width="4"/><rect x="681.2" y="236.2" width="109.8" height="30" rx="2.5" fill="none" stroke="#f3281d" stroke-width="3.6"/><path d="M444.0 274.5 L445.2 290.6 L447.0 285.1 L557.5 443.0 L452.7 281.3 L458.5 281.6 Z" fill="#f3281d"/><path d="M795.0 283.3 L800.5 298.5 L800.8 292.7 L1003.5 459.8 L805.2 287.5 L810.9 286.2 Z" fill="#f3281d"/></svg>
<div class="a" style="left:0px;top:864.0px;width:1349px;height:26.5px;background:#e6e6e6;border-top:1px solid #b4b4b4;"></div>
<svg class="a" style="left:16px;top:871.5px;" width="6" height="10" viewBox="0 0 6 10"><path d="M6 0 V10 L0 5 Z" fill="#c8c8c8"/></svg>
<svg class="a" style="left:42px;top:871.5px;" width="6" height="10" viewBox="0 0 6 10"><path d="M0 0 V10 L6 5 Z" fill="#c8c8c8"/></svg>
<div class="a" style="left:84.5px;top:864.0px;width:82px;height:23px;background:#fff;border-bottom:2px solid #217346;border-left:1px solid #cfcfcf;border-right:1px solid #cfcfcf;"></div>
<div class="a t " style="left:80.50px;width:90px;text-align:center;top:864.50px;height:22px;line-height:22px;font-size:15.2px;color:#217346;">数据详情</div>
<svg class="a" style="left:195.5px;top:868px;" width="19" height="19" viewBox="0 0 19 19"><circle cx="9.5" cy="9.5" r="8.3" fill="none" stroke="#6a6a6a" stroke-width="1.2"/><path d="M5 9.5 H14 M9.5 5 V14" stroke="#6a6a6a" stroke-width="1.3"/></svg>
<svg class="a" style="left:1021px;top:869px;" width="4" height="16" viewBox="0 0 4 16"><circle cx="2" cy="2" r="1.1" fill="#b0b0b0"/><circle cx="2" cy="8" r="1.1" fill="#b0b0b0"/><circle cx="2" cy="14" r="1.1" fill="#b0b0b0"/></svg>
<div class="a" style="left:1038.5px;top:868.5px;width:16.5px;height:16.5px;background:#fff;border:1px solid #ababab;"></div>
<svg class="a" style="left:1043.5px;top:872.5px;" width="6" height="9" viewBox="0 0 6 9"><path d="M6 0 V9 L0 4.5 Z" fill="#444"/></svg>
<div class="a" style="left:1055px;top:868.5px;width:295px;height:16.5px;background:#fff;border:1px solid #ababab;border-right:none;"></div>
<div class="a" style="left:0px;top:890.5px;width:1349px;height:23.5px;background:#f3f3f3;border-top:1px solid #c8c8c8;"></div>
<div class="a t " style="left:4px;top:892.70px;height:22px;line-height:22px;font-size:13px;color:#444;">就绪</div>
<svg class="a" style="left:53px;top:895px;" width="18" height="16" viewBox="0 0 18 16"><path d="M5.5 2.5 A6 6 0 1 0 12 2.2" fill="none" stroke="#555" stroke-width="1.2"/><path d="M5.5 0 V5.5 M3 3.3 L5.5 5.8 L8 3.3" fill="none" stroke="#555" stroke-width="1.1"/><text x="10.5" y="15" font-size="11" font-weight="bold" fill="#444" font-family="Liberation Sans">?</text></svg>
<div class="a t " style="left:73.3px;top:892.70px;height:22px;line-height:22px;font-size:13px;color:#444;">辅助功能: 不可用</div>
<div class="a" style="left:0px;top:914.4px;width:1349px;height:52.9px;background:#112a2e;"></div>
<div class="a" style="left:0px;top:971.6px;width:1350px;height:2.4px;background:#112a2e;"></div>
<svg class="a" style="left:13px;top:926px;" width="30" height="28" viewBox="0 0 30 28"><path d="M11.5 0.6 A7.5 7.5 0 1 1 1.5 10.2 A7.2 7.2 0 0 0 11.5 0.6 Z" fill="#f2a83a"/><path d="M6.5 27.3 A5.8 5.8 0 0 1 5.6 15.8 A7.6 7.6 0 0 1 19.6 13.6 A6.9 6.9 0 0 1 22 27.3 Z" fill="#9dbdf3"/><path d="M6.5 27.3 A5.8 5.8 0 0 1 1.2 23.5 C8 25 20 25 28.2 22.5 A6.9 6.9 0 0 1 22 27.3 Z" fill="#7ea8ec"/></svg>
<div class="a t " style="left:49.3px;top:920.50px;height:22px;line-height:22px;font-size:13.5px;color:#fff;">8°C</div>
<div class="a t " style="left:49.3px;top:940.00px;height:22px;line-height:22px;font-size:13.2px;color:#c9d1d3;">多云</div>
<div class="a" style="left:589.7px;top:928.3px;width:12.8px;height:12.8px;border-radius:0.8px;background:linear-gradient(135deg,#6ad4fb,#1597ea);"></div>
<div class="a" style="left:603.4000000000001px;top:928.3px;width:12.8px;height:12.8px;border-radius:0.8px;background:linear-gradient(135deg,#6ad4fb,#1597ea);"></div>
<div class="a" style="left:589.7px;top:942.0px;width:12.8px;height:12.8px;border-radius:0.8px;background:linear-gradient(135deg,#6ad4fb,#1597ea);"></div>
<div class="a" style="left:603.4000000000001px;top:942.0px;width:12.8px;height:12.8px;border-radius:0.8px;background:linear-gradient(135deg,#6ad4fb,#1597ea);"></div>
<div class="a" style="left:631.5px;top:923.5px;width:244.5px;height:34px;background:#f1f4f7;border-radius:17px;"></div>
<svg class="a" style="left:643px;top:932px;" width="18" height="18" viewBox="0 0 18 18"><circle cx="7.5" cy="7.5" r="5.8" fill="none" stroke="#333" stroke-width="1.9"/><path d="M11.8 11.8 L16.5 16.5" stroke="#333" stroke-width="2.2" stroke-linecap="round"/></svg>
<div class="a t " style="left:672.3px;top:930.50px;height:22px;line-height:22px;font-size:16px;color:#636363;">搜索</div>
<div class="a" style="left:631.5px;top:923.5px;width:244.5px;height:34px;border-radius:17px;overflow:hidden;"><svg class="a" style="left:188px;top:0.5px" width="56" height="33" viewBox="0 0 56 33"><path d="M4 33 C4 26 10 23 16 23 C24 23 28 27 30 33 Z" fill="#b9a27c"/><circle cx="17" cy="15" r="8" fill="#f1d3b3"/><path d="M7 15 C4 6 12 1 18 2 C27 1 31 9 27 16 C27 10 22 7 17 8 C12 7 8 10 7 15 Z" fill="#d9dde2"/><path d="M12 19 C15 21 19 21 22 19" stroke="#b98d6b" stroke-width="1.5" fill="none"/><path d="M14 27 L17 33 L20 27 Z" fill="#3f7fc4"/><path d="M26 33 C32 26 44 24 56 30 V33 Z" fill="#8fb86a"/><circle cx="33" cy="30" r="3" fill="#4fa3dc"/><path d="M44 30 L46 16 M46 16 L50 8 M42 20 L50 19 M44 30 L41 32 M46 24 L49 31" stroke="#6b5a4a" stroke-width="1.6" fill="none"/><circle cx="46" cy="13.5" r="2" fill="#6b5a4a"/><path d="M52 14 L54 30 M50 22 H55" stroke="#8b7a66" stroke-width="1.2"/></svg></div>
<svg class="a" style="left:890.5px;top:928px;" width="28" height="25" viewBox="0 0 28 25"><rect x="0.5" y="7.5" width="18" height="16.5" rx="2" fill="#6f7478"/><rect x="8.5" y="0.5" width="19" height="17" rx="2" fill="#e8eaec"/><rect x="8.5" y="7.5" width="10" height="10" fill="#b9bdc0"/></svg>
<div class="a" style="left:940px;top:927.5px;width:28px;height:28px;border-radius:50%;background:linear-gradient(135deg,#37c6d0 0%,#1f8fe0 50%,#0c59a4 100%);"></div>
<svg class="a" style="left:939px;top:927px;" width="30" height="29" viewBox="0 0 30 29"><path d="M3 9 C8 0 22 -1 27 8 C29 12 27 17 22 17 C19 17 18 15 19 13 C18 10 13 9 10 12 C8 14 8 18 10 21 C5 20 1 15 3 9 Z" fill="#5fe08a" opacity="0.9"/><path d="M10 12 C7 15 8 22 14 25 C18 27 23 26 26 23 C22 25 17 24 15 20 C13 17 14 13 17 12 C15 10 12 10 10 12 Z" fill="#0b4f96"/></svg>
<div class="a" style="left:949px;top:959.3px;width:8px;height:3px;background:#8c9699;border-radius:1.5px;"></div>
<svg class="a" style="left:989px;top:929px;" width="29" height="25" viewBox="0 0 29 25"><path d="M0.5 3 C0.5 1.5 1.5 0.5 3 0.5 H10 L13 3.5 H26 C27.5 3.5 28.5 4.5 28.5 6 V22 C28.5 23.5 27.5 24.5 26 24.5 H3 C1.5 24.5 0.5 23.5 0.5 22 Z" fill="#e8a920"/><path d="M0.5 8 C0.5 6.8 1.5 6 2.7 6 H26.3 C27.5 6 28.5 6.8 28.5 8 V22 C28.5 23.5 27.5 24.5 26 24.5 H3 C1.5 24.5 0.5 23.5 0.5 22 Z" fill="#fbd35a"/><rect x="7.5" y="16" width="14" height="8.5" rx="1" fill="#2b7fd6"/><rect x="10" y="19" width="9" height="2.2" fill="#1a5fb0"/></svg>
<div class="a" style="left:999.5px;top:959.3px;width:8px;height:3px;background:#8c9699;border-radius:1.5px;"></div>
<div class="a" style="left:1030px;top:918.7px;width:41px;height:44px;background:#83414f;border-radius:4px;"></div>
<div class="a" style="left:1066px;top:919.2px;width:9px;height:43px;background:#76394a;border-radius:0 4px 4px 0;"></div>
<div class="a" style="left:1030px;top:918.7px;width:38px;height:44px;background:#83414f;border-radius:4px;"></div>
<svg class="a" style="left:1038px;top:929px;" width="28.0" height="24.0" viewBox="0 0 28 24"><ellipse cx="10.5" cy="9" rx="10" ry="8.5" fill="#3cc35a"/><path d="M4 15 L3 20 L9 17 Z" fill="#3cc35a"/><circle cx="7" cy="7" r="1.3" fill="#1d7a33"/><circle cx="13.5" cy="7" r="1.3" fill="#1d7a33"/><ellipse cx="19" cy="15.5" rx="8.3" ry="7" fill="#ececec"/><path d="M23.5 21 L25.5 24 L20 22 Z" fill="#ececec"/><circle cx="16.3" cy="14" r="1.1" fill="#8d8d8d"/><circle cx="21.7" cy="14" r="1.1" fill="#8d8d8d"/></svg>
<div class="a" style="left:1047px;top:959.3px;width:8px;height:3px;background:#f08aa0;border-radius:1.5px;"></div>
<svg class="a" style="left:1088.5px;top:928px;" width="27" height="26" viewBox="0 0 27 26"><rect x="8" y="0.5" width="18.5" height="25" rx="2" fill="#21a366"/><rect x="8" y="0.5" width="9.2" height="6.3" fill="#21a366"/><rect x="17.2" y="0.5" width="9.3" height="6.3" fill="#33c481"/><rect x="8" y="6.8" width="9.2" height="6.2" fill="#107c41"/><rect x="17.2" y="6.8" width="9.3" height="6.2" fill="#21a366"/><rect x="8" y="13" width="9.2" height="6.2" fill="#185c37"/><rect x="17.2" y="13" width="9.3" height="6.2" fill="#107c41"/><rect x="8" y="19.2" width="18.5" height="6.3" fill="#185c37"/><rect x="0.5" y="5.5" width="15" height="15" rx="1.5" fill="#107c41"/><text x="3.6" y="17.3" font-size="11.5" font-weight="bold" fill="#fff" font-family="Liberation Sans">X</text></svg>
<div class="a" style="left:1097.5px;top:959.3px;width:8px;height:3px;background:#8c9699;border-radius:1.5px;"></div>
<svg class="a" style="left:1204.5px;top:933px;" width="18.5" height="15.8" viewBox="0 0 28 24"><ellipse cx="10.5" cy="9" rx="10" ry="8.5" fill="#3cc35a"/><path d="M4 15 L3 20 L9 17 Z" fill="#3cc35a"/><circle cx="7" cy="7" r="1.3" fill="#1d7a33"/><circle cx="13.5" cy="7" r="1.3" fill="#1d7a33"/><ellipse cx="19" cy="15.5" rx="8.3" ry="7" fill="#ececec"/><path d="M23.5 21 L25.5 24 L20 22 Z" fill="#ececec"/><circle cx="16.3" cy="14" r="1.1" fill="#8d8d8d"/><circle cx="21.7" cy="14" r="1.1" fill="#8d8d8d"/></svg>
<svg class="a" style="left:1240px;top:933px;" width="18.5" height="15.8" viewBox="0 0 28 24"><ellipse cx="10.5" cy="9" rx="10" ry="8.5" fill="#3cc35a"/><path d="M4 15 L3 20 L9 17 Z" fill="#3cc35a"/><circle cx="7" cy="7" r="1.3" fill="#1d7a33"/><circle cx="13.5" cy="7" r="1.3" fill="#1d7a33"/><ellipse cx="19" cy="15.5" rx="8.3" ry="7" fill="#ececec"/><path d="M23.5 21 L25.5 24 L20 22 Z" fill="#ececec"/><circle cx="16.3" cy="14" r="1.1" fill="#8d8d8d"/><circle cx="21.7" cy="14" r="1.1" fill="#8d8d8d"/></svg>
<svg class="a" style="left:1276.5px;top:932px;" width="20" height="20" viewBox="0 0 20 20"><rect x="0" y="0" width="16.5" height="17" fill="#1b1b1b"/><path d="M2.5 8.5 C5 4 10 3.5 13 5 V3 H16.5 V13 H8 C5 13 3.5 11 2.5 8.5 Z" fill="#76b900"/><path d="M5 8.5 C6.5 6.3 9 6 10.5 7.2 C9.5 8.5 9 10 10 11 C8 11.3 6 10.3 5 8.5 Z" fill="#1b1b1b"/><circle cx="14.5" cy="14.5" r="5" fill="#1b1b1b" stroke="#d8d8d8" stroke-width="1"/><path d="M14.5 11.5 V15.5 M12.7 13.8 L14.5 15.8 L16.3 13.8 M12.3 17 H16.7" stroke="#fff" stroke-width="1.1" fill="none"/></svg>
<svg class="a" style="left:1311.5px;top:932.5px;" width="22" height="20" viewBox="0 0 22 20"><path d="M15.5 5 A7 7 0 1 0 13.5 15.5" fill="none" stroke="#2b8ff0" stroke-width="3.6"/><path d="M10.5 10.5 L20 15 M12.5 14 L17 8" stroke="#f08a2b" stroke-width="2.6"/><path d="M11.5 11.5 L15.5 7" stroke="#4fc24a" stroke-width="2.6"/></svg>
</body></html>
